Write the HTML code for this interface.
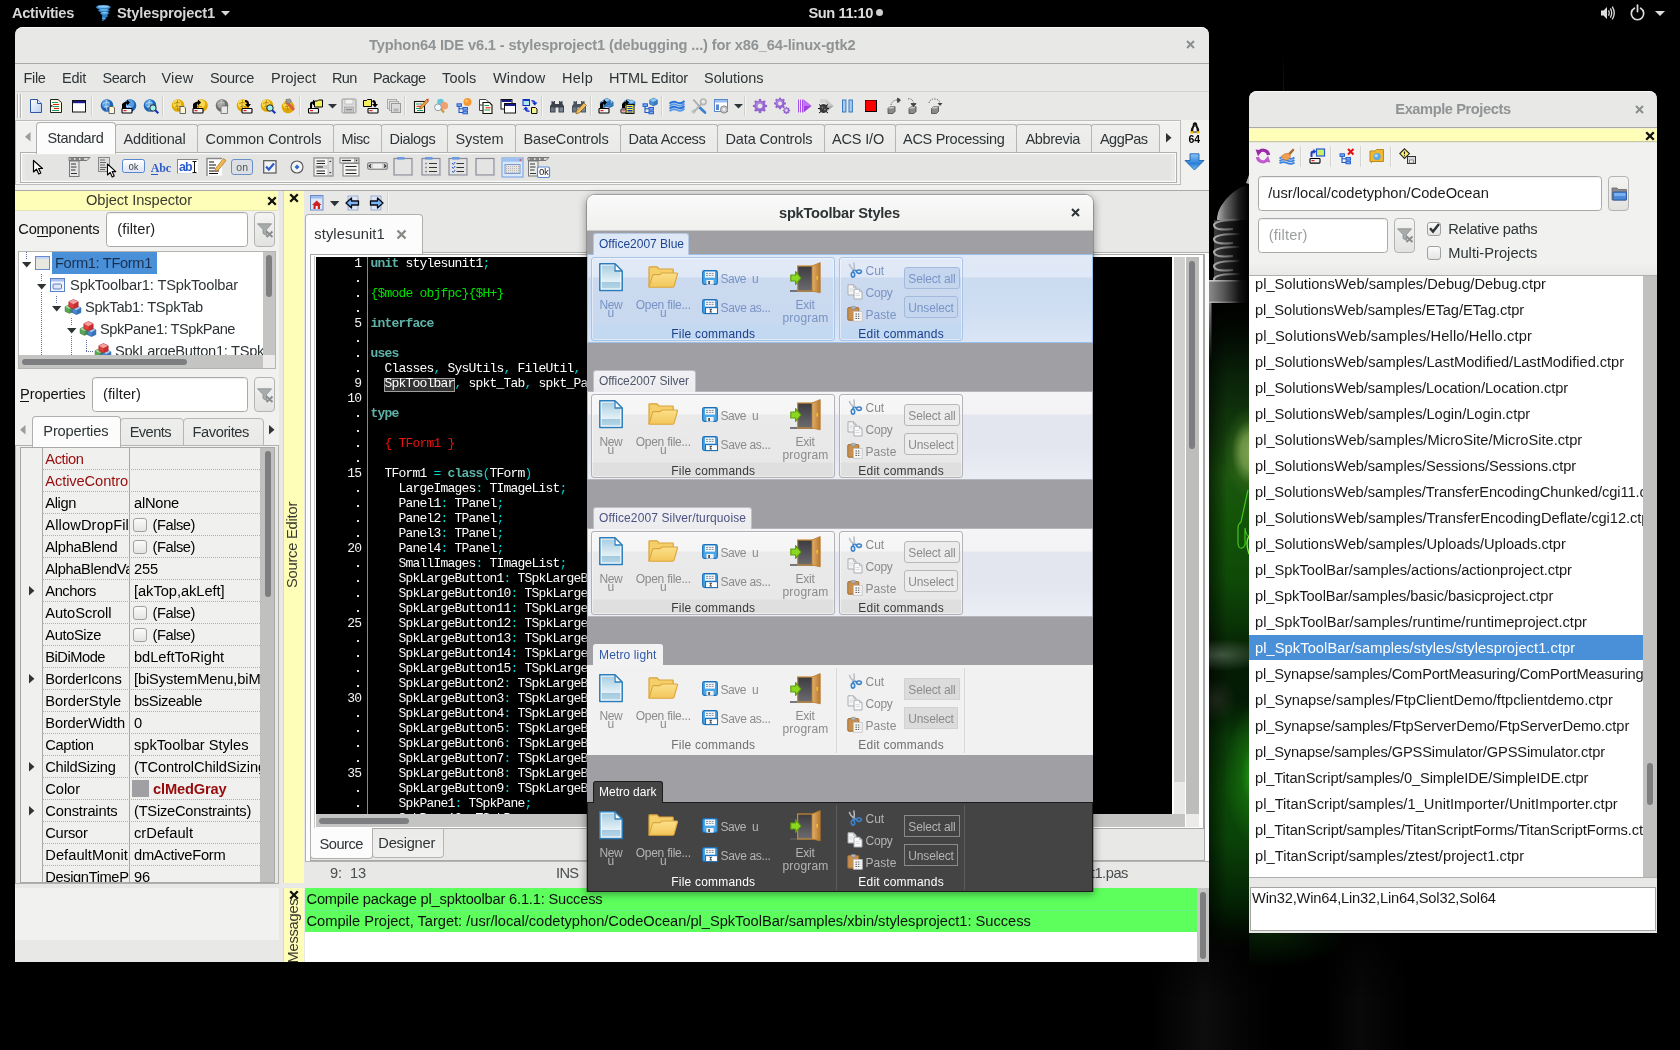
<!DOCTYPE html>
<html><head><meta charset="utf-8"><title>Typhon64 IDE</title>
<style>
html,body{margin:0;padding:0}
body{width:1680px;height:1050px;background:#000;position:relative;overflow:hidden;font-family:'Liberation Sans',sans-serif;font-size:14.5px;color:#2e3436}
div,span,svg{box-sizing:border-box}
svg{overflow:visible}
#root{position:absolute;left:0;top:0;width:1680px;height:1050px;will-change:transform}
.t{position:absolute;white-space:pre}
.b{position:absolute}
.f0{font-family:'Liberation Sans',sans-serif;font-size:14.67px;line-height:19px;font-weight:700;}
.f1{font-family:'Liberation Sans',sans-serif;font-size:14.5px;line-height:19px;}
.f2{font-family:'Liberation Mono',monospace;font-size:9px;line-height:12px;}
.f3{font-family:'Liberation Serif',serif;font-size:12px;line-height:16px;font-weight:700;}
.f4{font-family:'Liberation Sans',sans-serif;font-size:12.5px;line-height:16px;font-weight:700;}
.f5{font-family:'Liberation Mono',monospace;font-size:10.5px;line-height:14px;}
.f6{font-family:'Liberation Sans',sans-serif;font-size:10.5px;line-height:14px;font-weight:700;}
.f7{font-family:'Liberation Sans',sans-serif;font-size:14.67px;line-height:19px;}
.f8{font-family:'Liberation Mono',monospace;font-size:13px;line-height:17px;}
.f9{font-family:'Liberation Mono',monospace;font-size:13px;line-height:17px;font-weight:700;}
.f10{font-family:'Liberation Sans',sans-serif;font-size:12px;line-height:16px;}
</style></head>
<body>
<div id="root">
<!-- p_top -->
<div class="b" style="left:1209px;top:0px;width:40px;height:1050px;background:#000;background:radial-gradient(ellipse 26px 46px at 41px 452px,rgba(132,168,84,.95) 0,rgba(120,160,76,.85) 35%,rgba(60,110,30,.35) 70%,rgba(0,0,0,0) 100%),radial-gradient(ellipse 30px 70px at 46px 775px,rgba(36,170,20,.95) 0,rgba(24,120,14,.6) 45%,rgba(0,0,0,0) 100%),radial-gradient(ellipse 44px 16px at 14px 655px,rgba(120,140,120,.5) 0,rgba(0,0,0,0) 100%),radial-gradient(ellipse 20px 22px at 8px 700px,rgba(60,62,50,.45) 0,rgba(0,0,0,0) 100%),linear-gradient(90deg,rgba(0,0,0,.55) 0,rgba(0,0,0,0) 45%),linear-gradient(180deg,#000 0,#000 300px,#020802 330px,#0a240a 380px,#123a0c 430px,#1c560f 475px,#125408 520px,#0f4a08 580px,#0a3606 620px,#051c04 660px,#041a04 700px,#0a3a08 740px,#0c4a08 790px,#0a4208 840px,#042404 900px,#020c02 930px,#000 950px,#000 1050px)"></div><svg class="b" style="left:1209px;top:170px;" width="40" height="190" viewBox="0 0 40 190"><defs><linearGradient id="wc1" gradientUnits="userSpaceOnUse" x1="6" y1="0" x2="40" y2="0"><stop offset="0" stop-color="#c4c4c4"/><stop offset=".3" stop-color="#6a6a6a"/><stop offset=".7" stop-color="#1c1c1c"/><stop offset="1" stop-color="#000"/></linearGradient><linearGradient id="wc2" gradientUnits="userSpaceOnUse" x1="0" y1="0" x2="40" y2="0"><stop offset="0" stop-color="#8a8a8a"/><stop offset=".35" stop-color="#5a5a5a"/><stop offset=".75" stop-color="#141414"/><stop offset="1" stop-color="#000"/></linearGradient><linearGradient id="wc3" gradientUnits="userSpaceOnUse" x1="4" y1="0" x2="36" y2="0"><stop offset="0" stop-color="#c8c8c8"/><stop offset=".4" stop-color="#8a8a8a"/><stop offset=".85" stop-color="#8a8a8a" stop-opacity="0"/></linearGradient><linearGradient id="wc4" gradientUnits="userSpaceOnUse" x1="0" y1="130" x2="0" y2="190"><stop offset="0" stop-color="#8a8a8a"/><stop offset="1" stop-color="#8a8a8a" stop-opacity="0"/></linearGradient></defs><path d="M37 13 L40 5 V14 Z" fill="#b0b0b0"/><path d="M40 14 Q22 20 12 36 Q8 43 8 50 H40 Z" fill="url(#wc1)"/><rect x="5" y="50" width="35" height="60" fill="url(#wc1)" opacity=".3"/><path d="M40 50 Q6 49 5 55 Q5 61 24 59" fill="none" stroke="url(#wc3)" stroke-width="2.1" opacity=".85"/><path d="M40 64 Q6 63 5 69 Q5 75 24 73" fill="none" stroke="url(#wc3)" stroke-width="2.1" opacity=".85"/><path d="M40 77 Q6 76 5 82 Q5 88 24 86" fill="none" stroke="url(#wc3)" stroke-width="2.1" opacity=".85"/><path d="M40 91 Q6 90 5 96 Q5 102 24 100" fill="none" stroke="url(#wc3)" stroke-width="2.1" opacity=".85"/><path d="M40 104 Q6 103 5 109 Q5 115 24 113" fill="none" stroke="url(#wc3)" stroke-width="2.1" opacity=".85"/><rect x="0" y="110" width="40" height="23" fill="url(#wc2)"/><rect x="0" y="110" width="40" height="1.6" fill="url(#wc3)"/><rect x="0" y="131.5" width="40" height="1.5" fill="url(#wc3)" opacity=".7"/><rect x="0" y="133" width="2.5" height="57" fill="url(#wc4)"/><path d="M39 320 L32 352 Q29 354 29 358 V372 Q29 379 33 378 Q37 377 36 370 V358 Q37 366 40 366" fill="none" stroke="#48d020" stroke-width="1.2" opacity=".9"/><path d="M40 366 Q36 372 40 384" fill="none" stroke="#70f030" stroke-width="1.4"/></svg><div class="b" style="left:1150px;top:933px;width:300px;height:117px;background:linear-gradient(90deg,rgba(0,0,0,0) 0,rgba(24,24,24,.55) 18%,rgba(14,14,14,.35) 30%,rgba(0,0,0,0) 42%,rgba(0,0,0,0) 58%,rgba(20,20,20,.45) 70%,rgba(0,0,0,0) 86%);-webkit-mask-image:linear-gradient(180deg,rgba(0,0,0,.2),#000 60%);mask-image:linear-gradient(180deg,rgba(0,0,0,.2),#000 60%)"></div><div class="b" style="left:1249px;top:933px;width:100px;height:40px;background:radial-gradient(ellipse 80px 34px at 20px 0,rgba(8,44,8,.7) 0,rgba(0,0,0,0) 100%)"></div><div class="b" style="left:1283px;top:50px;width:1px;height:41px;background:linear-gradient(180deg,rgba(60,60,60,0),rgba(60,60,60,.3))"></div><div class="b" style="left:0px;top:0px;width:1680px;height:27px;background:#000;"></div><span class="t f0" style="left:12px;top:4px;color:#d6d6d6;letter-spacing:-0.32px;">Activities</span><svg class="b" style="left:95px;top:4px;" width="17" height="18" viewBox="0 0 17 18"><ellipse cx="8.3" cy="3.2" rx="7.2" ry="2.3" fill="#3f93d6"/><ellipse cx="8.3" cy="2.7" rx="5.4" ry="1.1" fill="#8cc6f2"/><ellipse cx="8.8" cy="6.3" rx="5.8" ry="2" fill="#2c7cc4"/><ellipse cx="8.8" cy="5.9" rx="4" ry=".9" fill="#6eb4ea"/><ellipse cx="9.6" cy="9.2" rx="4.3" ry="1.8" fill="#3f93d6"/><ellipse cx="9.6" cy="8.8" rx="2.8" ry=".8" fill="#8cc6f2"/><ellipse cx="9.8" cy="12" rx="3" ry="1.6" fill="#2c7cc4"/><ellipse cx="8.8" cy="14.4" rx="2" ry="1.3" fill="#4f9fdc"/><path d="M8.6 15 Q7 16.5 6.3 17.6 Q8.6 17 9.6 15.4 Z" fill="#3f93d6"/></svg><span class="t f0" style="left:117px;top:4px;color:#d6d6d6;letter-spacing:-0.16px;">Stylesproject1</span><svg class="b" style="left:221px;top:10.7px;" width="9" height="5" viewBox="0 0 9 5"><path d="M0 0 L9 0 L4.5 4.7 Z" fill="#d8d8d8"/></svg><span class="t f0" style="left:808.5px;top:4px;color:#dcdcdc;letter-spacing:-0.44px;">Sun 11:10</span><div class="b" style="left:875.5px;top:8.7px;width:7.6px;height:7.6px;background:#cfcfcf;border-radius:50%"></div><svg class="b" style="left:1600px;top:5px;" width="17" height="16" viewBox="0 0 17 16"><path d="M1 5.5 L3.5 5.5 L7 2 L7 14 L3.5 10.5 L1 10.5 Z" fill="#dcdcdc"/><path d="M8.6 5.3 Q10 8 8.6 10.7" stroke="#dcdcdc" stroke-width="1.3" fill="none"/><path d="M10.4 3.4 Q13 8 10.4 12.6" stroke="#dcdcdc" stroke-width="1.3" fill="none"/><path d="M12.3 1.6 Q16.2 8 12.3 14.4" stroke="#dcdcdc" stroke-width="1.3" fill="none"/></svg><svg class="b" style="left:1629px;top:4px;" width="17" height="17" viewBox="0 0 17 17"><path d="M5.4 4.2 A6.2 6.2 0 1 0 11.6 4.2" stroke="#dcdcdc" stroke-width="1.7" fill="none" stroke-linecap="round"/><path d="M8.5 1.2 L8.5 7.6" stroke="#dcdcdc" stroke-width="1.7" stroke-linecap="round"/></svg><svg class="b" style="left:1655px;top:10.8px;" width="10" height="6" viewBox="0 0 10 6"><path d="M0 0 L10 0 L5 5 Z" fill="#dcdcdc"/></svg>
<!-- p_ide -->
<div class="b" style="left:15px;top:27px;width:1194px;height:935px;background:#e8e8e7;border-radius:8px 8px 0 0;box-shadow:inset 0 1px 0 #f8f8f8"></div><span class="t f0" style="left:369px;top:36px;color:#8f9394;letter-spacing:-0.14px;">Typhon64 IDE v6.1 - stylesproject1 (debugging ...) for x86_64-linux-gtk2</span><svg class="b" style="left:1186px;top:40px;" width="9" height="9" viewBox="0 0 9 9"><path d="M1 1 L8 8 M8 1 L1 8" stroke="#8b8e8f" stroke-width="2" fill="none"/></svg><div class="b" style="left:15px;top:63px;width:1194px;height:1px;background:#a9a9a8;"></div><span class="t f1" style="left:23.5px;top:69px;color:#2e3436;letter-spacing:-0.34px;">File</span><span class="t f1" style="left:62px;top:69px;color:#2e3436;letter-spacing:-0.25px;">Edit</span><span class="t f1" style="left:102.5px;top:69px;color:#2e3436;letter-spacing:-0.49px;">Search</span><span class="t f1" style="left:161.5px;top:69px;color:#2e3436;letter-spacing:0.21px;">View</span><span class="t f1" style="left:210px;top:69px;color:#2e3436;letter-spacing:-0.33px;">Source</span><span class="t f1" style="left:271px;top:69px;color:#2e3436;letter-spacing:-0.02px;">Project</span><span class="t f1" style="left:332px;top:69px;color:#2e3436;letter-spacing:-0.7px;">Run</span><span class="t f1" style="left:373px;top:69px;color:#2e3436;letter-spacing:-0.56px;">Package</span><span class="t f1" style="left:442px;top:69px;color:#2e3436;letter-spacing:0.13px;">Tools</span><span class="t f1" style="left:493px;top:69px;color:#2e3436;letter-spacing:0.15px;">Window</span><span class="t f1" style="left:562px;top:69px;color:#2e3436;letter-spacing:0.29px;">Help</span><span class="t f1" style="left:609px;top:69px;color:#2e3436;letter-spacing:-0.17px;">HTML Editor</span><span class="t f1" style="left:704px;top:69px;color:#2e3436;letter-spacing:-0.02px;">Solutions</span><div class="b" style="left:15px;top:91px;width:1194px;height:1px;background:#d2d2d1;"></div><div class="b" style="left:17px;top:94px;width:1px;height:24px;background:#b4b4b4;"></div><div class="b" style="left:18px;top:94px;width:1px;height:24px;background:#fbfbfb;"></div><div class="b" style="left:20px;top:94px;width:1px;height:24px;background:#b4b4b4;"></div><div class="b" style="left:21px;top:94px;width:1px;height:24px;background:#fbfbfb;"></div><div class="b" style="left:91px;top:96px;width:1px;height:20px;background:#d0d0cf;"></div><div class="b" style="left:92px;top:96px;width:1px;height:20px;background:#f6f6f5;"></div><div class="b" style="left:162px;top:96px;width:1px;height:20px;background:#d0d0cf;"></div><div class="b" style="left:163px;top:96px;width:1px;height:20px;background:#f6f6f5;"></div><div class="b" style="left:299px;top:96px;width:1px;height:20px;background:#d0d0cf;"></div><div class="b" style="left:300px;top:96px;width:1px;height:20px;background:#f6f6f5;"></div><div class="b" style="left:404px;top:96px;width:1px;height:20px;background:#d0d0cf;"></div><div class="b" style="left:405px;top:96px;width:1px;height:20px;background:#f6f6f5;"></div><div class="b" style="left:541px;top:96px;width:1px;height:20px;background:#d0d0cf;"></div><div class="b" style="left:542px;top:96px;width:1px;height:20px;background:#f6f6f5;"></div><div class="b" style="left:590px;top:96px;width:1px;height:20px;background:#d0d0cf;"></div><div class="b" style="left:591px;top:96px;width:1px;height:20px;background:#f6f6f5;"></div><div class="b" style="left:661px;top:96px;width:1px;height:20px;background:#d0d0cf;"></div><div class="b" style="left:662px;top:96px;width:1px;height:20px;background:#f6f6f5;"></div><div class="b" style="left:744px;top:96px;width:1px;height:20px;background:#d0d0cf;"></div><div class="b" style="left:745px;top:96px;width:1px;height:20px;background:#f6f6f5;"></div><svg class="b" style="left:28px;top:98px;" width="16" height="16" viewBox="0 0 16 16"><defs><linearGradient id="gdn" x1="0" y1="0" x2="1" y2="1"><stop offset="0" stop-color="#fff"/><stop offset="1" stop-color="#b9cdf0"/></linearGradient></defs><path d="M2.5 1.5 H9.5 L13.5 5.5 V14.5 H2.5 Z" fill="url(#gdn)" stroke="#2f55a8" stroke-width="1"/><path d="M9.5 1.5 V5.5 H13.5" fill="#dfe8fa" stroke="#2f55a8" stroke-width="1"/></svg><svg class="b" style="left:48px;top:98px;" width="16" height="16" viewBox="0 0 16 16"><path d="M2.5 1.5 H10 L13.5 4.5 V14.5 H2.5 Z" fill="#fffde0" stroke="#222" stroke-width="1"/><path d="M4 4.5 H10 M5 8.5 H11 M4 12.5 H11" stroke="#1a9a7a" stroke-width="1.2"/><path d="M5 6.5 H11 M6 10.5 H11" stroke="#e02020" stroke-width="1.2"/><path d="M2 8 H4.5" stroke="#222" stroke-width="1.5"/></svg><svg class="b" style="left:70.5px;top:98px;" width="16" height="16" viewBox="0 0 16 16"><rect x="1.5" y="2.5" width="13" height="11.5" fill="#fff" stroke="#111" stroke-width="1"/><rect x="2" y="3" width="12" height="2.2" fill="#1a1a8a"/></svg><svg class="b" style="left:100px;top:98px;" width="16" height="16" viewBox="0 0 16 16"><circle cx="7" cy="7.5" r="6.3" fill="#1d63b8"/><circle cx="6" cy="6" r="4.2" fill="#5fa8e8" opacity=".85"/><path d="M3 6 Q6 3 9 5 M4 9 Q7 7 10 9 M6.5 2 Q5 7 7 12.5" stroke="#dff0ff" stroke-width=".8" fill="none" opacity=".8"/><path d="M9 8.5 H13 L14.5 10 V15.5 H9 Z" fill="#fff6d8" stroke="#555" stroke-width=".9"/></svg><svg class="b" style="left:121px;top:98px;" width="16" height="16" viewBox="0 0 16 16"><circle cx="9" cy="7.5" r="6.3" fill="#1d63b8"/><circle cx="9" cy="6" r="4.2" fill="#5fa8e8" opacity=".85"/><path d="M3 6 Q6 3 9 5 M4 9 Q7 7 10 9 M6.5 2 Q5 7 7 12.5" stroke="#dff0ff" stroke-width=".8" fill="none" opacity=".8"/><path d="M1 10 V6 Q3 3.5 6 3.5 V1.5 L9 4.5 L6 7.5 V5.5 Q5 5.5 5 7 V10 Z" fill="#000"/><rect x="1" y="10.5" width="10" height="4.5" rx=".8" fill="#f4f4f4" stroke="#000" stroke-width="1.1"/><rect x="2.5" y="12" width="3" height="1.2" fill="#e02020"/></svg><svg class="b" style="left:142.5px;top:98px;" width="16" height="16" viewBox="0 0 16 16"><circle cx="7" cy="7.5" r="6.3" fill="#1d63b8"/><circle cx="6" cy="6" r="4.2" fill="#5fa8e8" opacity=".85"/><path d="M3 6 Q6 3 9 5 M4 9 Q7 7 10 9 M6.5 2 Q5 7 7 12.5" stroke="#dff0ff" stroke-width=".8" fill="none" opacity=".8"/><circle cx="10" cy="10" r="3.2" fill="#9ff0f0" stroke="#222" stroke-width="1"/><path d="M12.3 12.3 L15.3 15.3" stroke="#1030c0" stroke-width="2"/></svg><svg class="b" style="left:171px;top:98px;" width="16" height="16" viewBox="0 0 16 16"><circle cx="7" cy="7.5" r="6.3" fill="#e0a800"/><circle cx="6" cy="6" r="4.2" fill="#ffe25a" opacity=".85"/><path d="M3 6 Q6 3 9 5 M4 9 Q7 7 10 9 M6.5 2 Q5 7 7 12.5" stroke="#9a6a00" stroke-width=".8" fill="none" opacity=".8"/><path d="M9 8.5 H13 L14.5 10 V15.5 H9 Z" fill="#fff6d8" stroke="#555" stroke-width=".9"/></svg><svg class="b" style="left:192px;top:98px;" width="16" height="16" viewBox="0 0 16 16"><circle cx="9.5" cy="7.5" r="6.3" fill="#e0a800"/><circle cx="9" cy="6" r="4.2" fill="#ffe25a" opacity=".85"/><path d="M3 6 Q6 3 9 5 M4 9 Q7 7 10 9 M6.5 2 Q5 7 7 12.5" stroke="#9a6a00" stroke-width=".8" fill="none" opacity=".8"/><path d="M1 10 V6 Q3 3.5 6 3.5 V1.5 L9 4.5 L6 7.5 V5.5 Q5 5.5 5 7 V10 Z" fill="#000"/><rect x="1" y="10.5" width="10" height="4.5" rx=".8" fill="#f4f4f4" stroke="#000" stroke-width="1.1"/><rect x="2.5" y="12" width="3" height="1.2" fill="#e02020"/></svg><svg class="b" style="left:215px;top:98px;" width="16" height="16" viewBox="0 0 16 16"><circle cx="7" cy="7.5" r="6.3" fill="#6e6e6e"/><circle cx="6" cy="6" r="4.2" fill="#a8a8a8" opacity=".85"/><path d="M3 6 Q6 3 9 5 M4 9 Q7 7 10 9 M6.5 2 Q5 7 7 12.5" stroke="#d8d8d8" stroke-width=".8" fill="none" opacity=".8"/><path d="M6 8 H12.5 V15.5 H6 Z" fill="#e8e8e8" stroke="#777" stroke-width=".9"/></svg><svg class="b" style="left:236px;top:98px;" width="16" height="16" viewBox="0 0 16 16"><circle cx="7" cy="7.5" r="6.3" fill="#e0a800"/><circle cx="6" cy="6" r="4.2" fill="#ffe25a" opacity=".85"/><path d="M3 6 Q6 3 9 5 M4 9 Q7 7 10 9 M6.5 2 Q5 7 7 12.5" stroke="#9a6a00" stroke-width=".8" fill="none" opacity=".8"/><path d="M9 2 Q13 2 13 6 H15 L12 9.5 L9 6 H11 Q11 4 9 4 Z" fill="#000"/><rect x="6" y="10.5" width="10" height="4.5" rx=".8" fill="#f4f4f4" stroke="#000" stroke-width="1.1"/><rect x="7.5" y="12" width="3" height="1.2" fill="#e02020"/></svg><svg class="b" style="left:259.5px;top:98px;" width="16" height="16" viewBox="0 0 16 16"><circle cx="7" cy="7.5" r="6.3" fill="#e0a800"/><circle cx="6" cy="6" r="4.2" fill="#ffe25a" opacity=".85"/><path d="M3 6 Q6 3 9 5 M4 9 Q7 7 10 9 M6.5 2 Q5 7 7 12.5" stroke="#9a6a00" stroke-width=".8" fill="none" opacity=".8"/><circle cx="10" cy="10" r="3.2" fill="#9ff0f0" stroke="#222" stroke-width="1"/><path d="M12.3 12.3 L15.3 15.3" stroke="#1030c0" stroke-width="2"/></svg><svg class="b" style="left:280.5px;top:98px;" width="16" height="16" viewBox="0 0 16 16"><circle cx="7" cy="9" r="6.3" fill="#e0a800"/><circle cx="6" cy="6" r="4.2" fill="#ffe25a" opacity=".85"/><path d="M3 6 Q6 3 9 5 M4 9 Q7 7 10 9 M6.5 2 Q5 7 7 12.5" stroke="#9a6a00" stroke-width=".8" fill="none" opacity=".8"/><path d="M6 2 L14 11 L12 13 L4 4 Z" fill="#e05a40"/><path d="M5 1.5 L9 1 L10.5 3.5 L8 6 L5.5 5 Z" fill="#999" stroke="#666" stroke-width=".6"/></svg><svg class="b" style="left:306.5px;top:98px;" width="16" height="16" viewBox="0 0 16 16"><path d="M3 10 V6 Q3 3.5 6 3.5 V1.5 L9 4.5 L6 7.5 V5.5 Q5 5.5 5 7 V10 Z" fill="#000"/><path d="M7.5 3.0 H10.5 L11.5 2.0 H15.5 V9.0 H7.5 Z" fill="#f4f05a" stroke="#000" stroke-width="1"/><rect x="1.5" y="10.5" width="10" height="4.5" rx=".8" fill="#f4f4f4" stroke="#000" stroke-width="1.1"/><rect x="3" y="12" width="3" height="1.2" fill="#e02020"/></svg><svg class="b" style="left:341px;top:98px;" width="16" height="16" viewBox="0 0 16 16"><rect x="1" y="1" width="14" height="14" rx="1" fill="#dcdcdc" stroke="#9a9a9a" stroke-width="1"/><rect x="4" y="1.5" width="8" height="4.5" fill="#f2f2f2" stroke="#aaa" stroke-width=".6"/><rect x="3.5" y="9" width="9" height="5.5" fill="#c4c4c4" stroke="#9a9a9a" stroke-width=".6"/><rect x="5" y="11" width="6" height="1.2" fill="#8e8e8e"/></svg><svg class="b" style="left:363px;top:98px;" width="16" height="16" viewBox="0 0 16 16"><path d="M0.5 2.5 H3.5 L4.5 1.5 H8.5 V8.5 H0.5 Z" fill="#f4f05a" stroke="#000" stroke-width="1"/><path d="M10 2 Q13 2 13 6 H15 L12 9.5 L9 6 H11 Q11 4 9 4 Z" fill="#000"/><rect x="5" y="10.5" width="10" height="4.5" rx=".8" fill="#f4f4f4" stroke="#000" stroke-width="1.1"/><rect x="6.5" y="12" width="3" height="1.2" fill="#e02020"/></svg><svg class="b" style="left:385.5px;top:98px;" width="16" height="16" viewBox="0 0 16 16"><rect x="1.5" y="1.5" width="9" height="9" fill="#e4e4e4" stroke="#aaa"/><rect x="3.5" y="3.5" width="9" height="9" fill="#e4e4e4" stroke="#aaa"/><rect x="5.5" y="5.5" width="9" height="9" fill="#dcdcdc" stroke="#9a9a9a"/><rect x="7.5" y="10.5" width="5" height="3" fill="#b4b4b4"/></svg><svg class="b" style="left:412.5px;top:98px;" width="16" height="16" viewBox="0 0 16 16"><rect x="1.5" y="3.5" width="10" height="11" fill="#fffde8" stroke="#111" stroke-width="1.1"/><path d="M3 6 H9 M3 10.5 H8 M4 12.5 H10" stroke="#1a9a7a" stroke-width="1.1"/><path d="M3.5 8.3 H8" stroke="#e02020" stroke-width="1.1"/><path d="M7 9 L13.5 1.5 L15.5 3 L9 10.5 L6.5 11 Z" fill="#f0a040" stroke="#7a3a10" stroke-width=".6"/><path d="M13 1.5 L15.5 0.5 L15.5 3 Z" fill="#e03030"/></svg><svg class="b" style="left:433px;top:98px;" width="16" height="16" viewBox="0 0 16 16"><circle cx="7.5" cy="4" r="3.3" fill="#62c8d8"/><circle cx="11.3" cy="7.8" r="3.8" fill="#f0a070"/><path d="M8 11 L11 14.5" stroke="#c89a40" stroke-width="2.2"/><circle cx="5" cy="9.3" r="3.4" fill="#f0f8ff" stroke="#999" stroke-width="1"/></svg><svg class="b" style="left:455.5px;top:98px;" width="16" height="16" viewBox="0 0 16 16"><circle cx="11.5" cy="4" r="4" fill="#f59a30"/><circle cx="10.5" cy="3" r="1.8" fill="#ffc070" opacity=".8"/><path d="M3 8 V14.5 H8 M3 10.8 H8" stroke="#1d55c8" stroke-width="1.1" fill="none"/><rect x="1" y="5.8" width="4.5" height="2.6" fill="#78a8f0" stroke="#1d55c8" stroke-width=".9"/><rect x="7" y="9.5" width="4.5" height="2.6" fill="#78a8f0" stroke="#1d55c8" stroke-width=".9"/><rect x="7" y="13.2" width="4.5" height="2.6" fill="#78a8f0" stroke="#1d55c8" stroke-width=".9"/></svg><svg class="b" style="left:478px;top:98px;" width="16" height="16" viewBox="0 0 16 16"><path d="M1.5 1.5 H8 L10.5 4 V12.5 H1.5 Z" fill="#fff" stroke="#444" stroke-width="1"/><path d="M5 4.5 H11.5 L14 7 V15.5 H5 Z" fill="#fffde8" stroke="#111" stroke-width="1.1"/><path d="M6.5 7.5 H11 M6.5 12 H12" stroke="#1a9a7a" stroke-width="1.1"/><path d="M7.5 9.8 H12.5" stroke="#e02020" stroke-width="1.1"/><path d="M2 7 H4.5" stroke="#333" stroke-width="1"/></svg><svg class="b" style="left:500px;top:98px;" width="16" height="16" viewBox="0 0 16 16"><rect x="1" y="1.5" width="11" height="9.5" fill="#fff" stroke="#111" stroke-width="1"/><rect x="1.5" y="2" width="10" height="2" fill="#1a1a8a"/><rect x="4.5" y="5.5" width="11" height="9.5" fill="#fff" stroke="#111" stroke-width="1"/><rect x="5" y="6" width="10" height="2" fill="#1a1a8a"/></svg><svg class="b" style="left:521.5px;top:98px;" width="16" height="16" viewBox="0 0 16 16"><rect x="1" y="1.5" width="6.5" height="6" fill="#b0e8f0" stroke="#1030c0" stroke-width="1"/><rect x="1.5" y="1.5" width="6" height="1.5" fill="#1030c0"/><path d="M9.5 9.5 H13.5 L15 11 V15.5 H9.5 Z" fill="#f4f08a" stroke="#111" stroke-width="1"/><path d="M9.5 2 Q13.5 2 13.5 4.5 H15.5 L12.8 7.5 L10 4.5 H12 Q12 3.5 9.5 3.5 Z" fill="#1030d0"/><path d="M7.5 14 Q3 14 3 11.5 H1 L3.8 8.5 L6.5 11.5 H4.5 Q4.5 12.5 7.5 12.5 Z" fill="#1030d0"/></svg><svg class="b" style="left:549px;top:98px;" width="16" height="16" viewBox="0 0 16 16"><path d="M2.5 3 H6 V6 H10 V3 H13.5 V6 L15 8 V14.5 H9.5 V9.5 H6.5 V14.5 H1 V8 L2.5 6 Z" fill="#3c424c"/><rect x="2" y="9.5" width="3.5" height="4" fill="#6c7684"/><rect x="10.5" y="9.5" width="3.5" height="4" fill="#7c8898"/><path d="M3.5 3.5 H5 M11 3.5 H12.5" stroke="#9aa6b4" stroke-width="1"/></svg><svg class="b" style="left:570.5px;top:98px;" width="16" height="16" viewBox="0 0 16 16"><path d="M2.5 3 H6 V6 H10 V3 H13.5 V6 L15 8 V14.5 H9.5 V9.5 H6.5 V14.5 H1 V8 L2.5 6 Z" fill="#4a525e"/><rect x="2" y="9.5" width="3.5" height="4" fill="#6c7684"/><rect x="10.5" y="9.5" width="3.5" height="4" fill="#7c8898"/><path d="M3.5 3.5 H5 M11 3.5 H12.5" stroke="#9aa6b4" stroke-width="1"/><path d="M5.5 13 L13 5 L15.5 7.5 L8 15 L5 15.8 Z" fill="#f0c060" stroke="#8a5a18" stroke-width=".7"/></svg><svg class="b" style="left:598px;top:98px;" width="16" height="16" viewBox="0 0 16 16"><path d="M6 2.4 L9.6 4.02 L9.6 7.98 L6 9.6 L2.4 7.98 L2.4 4.02 Z" fill="#4a90d0" stroke="#2a6ab0" stroke-width=".7"/><path d="M6 2.4 L9.6 4.02 L6 6 L2.4 4.02 Z" fill="#8ec8f0"/><path d="M6 6 L9.6 4.02 L9.6 7.98 L6 9.6 Z" fill="#2a6ab0" opacity=".55"/><path d="M11.5 2.4 L15.1 4.02 L15.1 7.98 L11.5 9.6 L7.9 7.98 L7.9 4.02 Z" fill="#4a90d0" stroke="#2a6ab0" stroke-width=".7"/><path d="M11.5 2.4 L15.1 4.02 L11.5 6 L7.9 4.02 Z" fill="#8ec8f0"/><path d="M11.5 6 L15.1 4.02 L15.1 7.98 L11.5 9.6 Z" fill="#2a6ab0" opacity=".55"/><path d="M8.8 0.3999999999999999 L12.200000000000001 1.9299999999999997 L12.200000000000001 5.67 L8.8 7.199999999999999 L5.4 5.67 L5.4 1.9299999999999997 Z" fill="#4a90d0" stroke="#2a6ab0" stroke-width=".7"/><path d="M8.8 0.3999999999999999 L12.200000000000001 1.9299999999999997 L8.8 3.8 L5.4 1.9299999999999997 Z" fill="#8ec8f0"/><path d="M8.8 3.8 L12.200000000000001 1.9299999999999997 L12.200000000000001 5.67 L8.8 7.199999999999999 Z" fill="#2a6ab0" opacity=".55"/><path d="M2 10 V6 Q3 3.5 6 3.5 V1.5 L9 4.5 L6 7.5 V5.5 Q5 5.5 5 7 V10 Z" fill="#000"/><rect x="1" y="10.5" width="10" height="4.5" rx=".8" fill="#f4f4f4" stroke="#000" stroke-width="1.1"/><rect x="2.5" y="12" width="3" height="1.2" fill="#e02020"/></svg><svg class="b" style="left:620px;top:98px;" width="16" height="16" viewBox="0 0 16 16"><path d="M8 1.4 L11.6 3.0199999999999996 L11.6 6.98 L8 8.6 L4.4 6.98 L4.4 3.0199999999999996 Z" fill="#4a90d0" stroke="#2a6ab0" stroke-width=".7"/><path d="M8 1.4 L11.6 3.0199999999999996 L8 5 L4.4 3.0199999999999996 Z" fill="#8ec8f0"/><path d="M8 5 L11.6 3.0199999999999996 L11.6 6.98 L8 8.6 Z" fill="#2a6ab0" opacity=".55"/><path d="M11.5 2.1 L14.9 3.63 L14.9 7.37 L11.5 8.9 L8.1 7.37 L8.1 3.63 Z" fill="#4a90d0" stroke="#2a6ab0" stroke-width=".7"/><path d="M11.5 2.1 L14.9 3.63 L11.5 5.5 L8.1 3.63 Z" fill="#8ec8f0"/><path d="M11.5 5.5 L14.9 3.63 L14.9 7.37 L11.5 8.9 Z" fill="#2a6ab0" opacity=".55"/><path d="M2 10 V6 Q3 3.5 6 3.5 V1.5 L9 4.5 L6 7.5 V5.5 Q5 5.5 5 7 V10 Z" fill="#000"/><rect x="1" y="11" width="6" height="4" rx=".8" fill="#f4f4f4" stroke="#000" stroke-width="1"/><rect x="2.3" y="12.3" width="2.5" height="1.1" fill="#e02020"/><rect x="6" y="6.5" width="8" height="9" fill="#f4f04a" stroke="#111" stroke-width="1"/><path d="M7.5 8.5 H12.5 M7.5 10.5 H12.5 M7.5 12.5 H12.5 M7.5 14 H12.5" stroke="#1030c0" stroke-width="1"/></svg><svg class="b" style="left:641.5px;top:98px;" width="16" height="16" viewBox="0 0 16 16"><path d="M11.5 0.20000000000000018 L15.3 1.9100000000000001 L15.3 6.09 L11.5 7.8 L7.7 6.09 L7.7 1.9100000000000001 Z" fill="#4a90d0" stroke="#2a6ab0" stroke-width=".7"/><path d="M11.5 0.20000000000000018 L15.3 1.9100000000000001 L11.5 4 L7.7 1.9100000000000001 Z" fill="#8ec8f0"/><path d="M11.5 4 L15.3 1.9100000000000001 L15.3 6.09 L11.5 7.8 Z" fill="#2a6ab0" opacity=".55"/><path d="M3 8 V14.5 H8 M3 10.8 H8" stroke="#1d55c8" stroke-width="1.1" fill="none"/><rect x="1" y="5.8" width="4.5" height="2.6" fill="#78a8f0" stroke="#1d55c8" stroke-width=".9"/><rect x="7" y="9.5" width="4.5" height="2.6" fill="#78a8f0" stroke="#1d55c8" stroke-width=".9"/><rect x="7" y="13.2" width="4.5" height="2.6" fill="#78a8f0" stroke="#1d55c8" stroke-width=".9"/></svg><svg class="b" style="left:668.5px;top:98px;" width="16" height="16" viewBox="0 0 16 16"><path d="M.5 5.5 Q4 2.5 8 4.5 T15.5 3" stroke="#2a72d8" stroke-width="1.9" fill="none"/><path d="M.5 8.0 Q4 5.0 8 7.0 T15.5 5.5" stroke="#5a9ae8" stroke-width="1.9" fill="none"/><path d="M.5 10.5 Q4 7.5 8 9.5 T15.5 8" stroke="#2a72d8" stroke-width="1.9" fill="none"/><path d="M.5 13.0 Q4 10.0 8 12.0 T15.5 10.5" stroke="#5a9ae8" stroke-width="1.9" fill="none"/></svg><svg class="b" style="left:691px;top:98px;" width="16" height="16" viewBox="0 0 16 16"><path d="M2 2 L3 1.5 L13.5 13 L14.5 15 L12.5 14 Z" fill="#b8b8b8" stroke="#8a8a8a" stroke-width=".5"/><path d="M8 9 L14 14.5" stroke="#3a80d0" stroke-width="2.6" stroke-linecap="round"/><path d="M2.5 14 L11 5.5" stroke="#b4b4b4" stroke-width="1.8"/><circle cx="12.3" cy="3.8" r="2.8" fill="none" stroke="#b4b4b4" stroke-width="1.6"/><circle cx="2.6" cy="13.6" r="1.5" fill="none" stroke="#b4b4b4" stroke-width="1"/></svg><svg class="b" style="left:713px;top:98px;" width="16" height="16" viewBox="0 0 16 16"><rect x="1.5" y="1.5" width="13" height="12" fill="#fff" stroke="#5a88d0" stroke-width="1"/><rect x="2" y="2" width="12" height="2.5" fill="#9ac0f0"/><rect x="3" y="6.5" width="3" height="5.5" fill="#5a88d0"/><circle cx="11" cy="11.5" r="3.6" fill="#c8c8c8" stroke="#8a8a8a" stroke-width="1"/><circle cx="11" cy="11.5" r="1.3" fill="#f4f4f4"/></svg><svg class="b" style="left:752px;top:98px;" width="16" height="16" viewBox="0 0 16 16"><circle cx="13.89" cy="8.00" r="1.36" fill="#9465cf"/><circle cx="12.16" cy="12.16" r="1.36" fill="#9465cf"/><circle cx="8.00" cy="13.89" r="1.36" fill="#9465cf"/><circle cx="3.84" cy="12.16" r="1.36" fill="#9465cf"/><circle cx="2.11" cy="8.00" r="1.36" fill="#9465cf"/><circle cx="3.84" cy="3.84" r="1.36" fill="#9465cf"/><circle cx="8.00" cy="2.11" r="1.36" fill="#9465cf"/><circle cx="12.16" cy="3.84" r="1.36" fill="#9465cf"/><circle cx="8" cy="8" r="5.58" fill="#9465cf"/><circle cx="7.4" cy="7.2" r="3.72" fill="#c4a4ea" opacity=".5"/><circle cx="8" cy="8" r="2.36" fill="#e8e8e7"/></svg><svg class="b" style="left:773.5px;top:98px;" width="16" height="16" viewBox="0 0 16 16"><circle cx="10.94" cy="5.50" r="1.14" fill="#9465cf"/><circle cx="9.49" cy="8.99" r="1.14" fill="#9465cf"/><circle cx="6.00" cy="10.44" r="1.14" fill="#9465cf"/><circle cx="2.51" cy="8.99" r="1.14" fill="#9465cf"/><circle cx="1.06" cy="5.50" r="1.14" fill="#9465cf"/><circle cx="2.51" cy="2.01" r="1.14" fill="#9465cf"/><circle cx="6.00" cy="0.56" r="1.14" fill="#9465cf"/><circle cx="9.49" cy="2.01" r="1.14" fill="#9465cf"/><circle cx="6" cy="5.5" r="4.68" fill="#9465cf"/><circle cx="5.4" cy="4.7" r="3.12" fill="#c4a4ea" opacity=".5"/><circle cx="6" cy="5.5" r="1.98" fill="#e8e8e7"/><circle cx="15.54" cy="12.50" r="0.70" fill="#9465cf"/><circle cx="14.65" cy="14.65" r="0.70" fill="#9465cf"/><circle cx="12.50" cy="15.54" r="0.70" fill="#9465cf"/><circle cx="10.35" cy="14.65" r="0.70" fill="#9465cf"/><circle cx="9.46" cy="12.50" r="0.70" fill="#9465cf"/><circle cx="10.35" cy="10.35" r="0.70" fill="#9465cf"/><circle cx="12.50" cy="9.46" r="0.70" fill="#9465cf"/><circle cx="14.65" cy="10.35" r="0.70" fill="#9465cf"/><circle cx="12.5" cy="12.5" r="2.88" fill="#9465cf"/><circle cx="11.9" cy="11.7" r="1.92" fill="#c4a4ea" opacity=".5"/><circle cx="12.5" cy="12.5" r="1.22" fill="#e8e8e7"/></svg><svg class="b" style="left:797px;top:98px;" width="16" height="16" viewBox="0 0 16 16"><path d="M1.5 1.5 V14.5 M3.5 1.5 V14.5 M5.5 1.5 V14.5" stroke="#a850e8" stroke-width="1"/><path d="M6.5 1.5 L14.5 8 L6.5 14.5 Z" fill="#a040e0"/><path d="M6.5 1.5 L14.5 8 L6.5 8 Z" fill="#c070f0"/></svg><svg class="b" style="left:818px;top:98px;" width="16" height="16" viewBox="0 0 16 16"><path d="M3 1.5 V5 M5 1.5 V5 M7 1.5 V5" stroke="#999" stroke-width=".9" stroke-dasharray="1 1"/><path d="M8 1.5 L15.5 8 L8 14.5 Z" fill="#a8a8a8"/><path d="M8 1.5 L15.5 8 L8 8 Z" fill="#c8c8c8"/><ellipse cx="5.5" cy="10.5" rx="4" ry="4.5" fill="#3a3a3a"/><path d="M1 6.5 L3 8 M10 6.5 L8 8 M0 10.5 H2 M9 10.5 H11 M1 15 L3 13.5 M10 15 L8 13.5" stroke="#111" stroke-width="1"/><circle cx="4.3" cy="9.5" r="1" fill="#777"/><circle cx="6.8" cy="11.5" r="1" fill="#777"/></svg><svg class="b" style="left:840px;top:98px;" width="16" height="16" viewBox="0 0 16 16"><rect x="2.5" y="2" width="3.4" height="12" fill="#a8cdf0" stroke="#3a78c0" stroke-width="1"/><rect x="9" y="2" width="3.4" height="12" fill="#a8cdf0" stroke="#3a78c0" stroke-width="1"/></svg><svg class="b" style="left:863.5px;top:98px;" width="16" height="16" viewBox="0 0 16 16"><rect x="1" y="2" width="12" height="12" fill="#000"/><rect x="1.5" y="2.5" width="10.5" height="10.5" fill="#ff0000"/></svg><svg class="b" style="left:886.5px;top:98px;" width="16" height="16" viewBox="0 0 16 16"><path d="M1 10.5 L3 8.5 H8 V13.5 L6 15.5 H1 Z" fill="#8a8a8a" stroke="#4a4a4a" stroke-width=".8"/><path d="M1 10.5 L3 8.5 H8 L6 10.5 Z" fill="#c4c4c4"/><path d="M4 7 Q5 2 10.5 2" stroke="#555" stroke-width="1" stroke-dasharray="1.2 1.2" fill="none"/><path d="M10.5 0 L13.5 2.2 L10.5 4.4 Z M11.8 0 V4.6" fill="#444" stroke="#444" stroke-width=".8"/></svg><svg class="b" style="left:908px;top:98px;" width="16" height="16" viewBox="0 0 16 16"><path d="M1 10.5 L3 8.5 H8 V13.5 L6 15.5 H1 Z" fill="#8a8a8a" stroke="#4a4a4a" stroke-width=".8"/><path d="M1 10.5 L3 8.5 H8 L6 10.5 Z" fill="#c4c4c4"/><path d="M0 1 Q4.5 0 5.5 5" stroke="#555" stroke-width="1" stroke-dasharray="1.2 1.2" fill="none"/><path d="M3 5.5 H8 L5.5 8.5 Z M3 6.2 H8" fill="#444" stroke="#444" stroke-width=".8"/></svg><svg class="b" style="left:928px;top:98px;" width="16" height="16" viewBox="0 0 16 16"><path d="M3.5 10.5 L5.5 8.5 H10.5 V13.5 L8.5 15.5 H3.5 Z" fill="#8a8a8a" stroke="#4a4a4a" stroke-width=".8"/><path d="M3.5 10.5 L5.5 8.5 H10.5 L8.5 10.5 Z" fill="#c4c4c4"/><path d="M1 5 Q2 .5 7 1 Q11.5 1.5 12 5" stroke="#555" stroke-width="1" stroke-dasharray="1.2 1.2" fill="none"/><path d="M9.5 5 H14.5 L12 8 Z" fill="#444"/></svg><svg class="b" style="left:327.5px;top:104px;" width="9" height="5" viewBox="0 0 9 5"><path d="M0 0 H9 L4.5 4.5 Z" fill="#2e3436"/></svg><svg class="b" style="left:733.5px;top:104px;" width="9" height="5" viewBox="0 0 9 5"><path d="M0 0 H9 L4.5 4.5 Z" fill="#2e3436"/></svg><div class="b" style="left:15px;top:120px;width:1194px;height:70px;background:#f1f1f0;"></div><div class="b" style="left:15px;top:120px;width:1166px;height:1px;background:#bdbdbc;"></div><div class="b" style="left:16px;top:121px;width:1164px;height:1px;background:#f9f9f9;"></div><div class="b" style="left:1180px;top:120px;width:1px;height:65px;background:#bdbdbc;"></div><div class="b" style="left:15px;top:184px;width:1166px;height:1px;background:#bdbdbc;"></div><div class="b" style="left:16px;top:183px;width:1164px;height:1px;background:#fafafa;"></div><div class="b" style="left:15px;top:120px;width:1px;height:65px;background:#bdbdbc;"></div><div class="b" style="left:20px;top:152px;width:1157px;height:31px;background:#e8e8e7;border:1px solid #b0b0af;box-shadow:inset 1px 1px 0 #fbfbfb,inset -1px -1px 0 #fbfbfb"></div><div class="b" style="left:25px;top:155px;width:1146px;height:25px;background:#e4e4e3;"></div><div class="b" style="left:115px;top:124px;width:83px;height:29px;background:#efefee;border:1px solid #b6b6b5;border-bottom:1px solid #b0b0af;border-radius:3px 3px 0 0;background:linear-gradient(180deg,#eeeeed,#eaeae9)"></div><span class="t f1" style="left:123.5px;top:130px;color:#2e3436;letter-spacing:-0.17px;">Additional</span><div class="b" style="left:197px;top:124px;width:137px;height:29px;background:#efefee;border:1px solid #b6b6b5;border-bottom:1px solid #b0b0af;border-radius:3px 3px 0 0;background:linear-gradient(180deg,#eeeeed,#eaeae9)"></div><span class="t f1" style="left:205.5px;top:130px;color:#2e3436;letter-spacing:-0.06px;">Common Controls</span><div class="b" style="left:333px;top:124px;width:49px;height:29px;background:#efefee;border:1px solid #b6b6b5;border-bottom:1px solid #b0b0af;border-radius:3px 3px 0 0;background:linear-gradient(180deg,#eeeeed,#eaeae9)"></div><span class="t f1" style="left:341.5px;top:130px;color:#2e3436;letter-spacing:-0.45px;">Misc</span><div class="b" style="left:381px;top:124px;width:67px;height:29px;background:#efefee;border:1px solid #b6b6b5;border-bottom:1px solid #b0b0af;border-radius:3px 3px 0 0;background:linear-gradient(180deg,#eeeeed,#eaeae9)"></div><span class="t f1" style="left:389.5px;top:130px;color:#2e3436;letter-spacing:-0.34px;">Dialogs</span><div class="b" style="left:447px;top:124px;width:69px;height:29px;background:#efefee;border:1px solid #b6b6b5;border-bottom:1px solid #b0b0af;border-radius:3px 3px 0 0;background:linear-gradient(180deg,#eeeeed,#eaeae9)"></div><span class="t f1" style="left:455.5px;top:130px;color:#2e3436;letter-spacing:-0.06px;">System</span><div class="b" style="left:515px;top:124px;width:106px;height:29px;background:#efefee;border:1px solid #b6b6b5;border-bottom:1px solid #b0b0af;border-radius:3px 3px 0 0;background:linear-gradient(180deg,#eeeeed,#eaeae9)"></div><span class="t f1" style="left:523.5px;top:130px;color:#2e3436;letter-spacing:-0.17px;">BaseControls</span><div class="b" style="left:620px;top:124px;width:98px;height:29px;background:#efefee;border:1px solid #b6b6b5;border-bottom:1px solid #b0b0af;border-radius:3px 3px 0 0;background:linear-gradient(180deg,#eeeeed,#eaeae9)"></div><span class="t f1" style="left:628.5px;top:130px;color:#2e3436;letter-spacing:-0.33px;">Data Access</span><div class="b" style="left:717px;top:124px;width:108px;height:29px;background:#efefee;border:1px solid #b6b6b5;border-bottom:1px solid #b0b0af;border-radius:3px 3px 0 0;background:linear-gradient(180deg,#eeeeed,#eaeae9)"></div><span class="t f1" style="left:725.5px;top:130px;color:#2e3436;letter-spacing:-0.13px;">Data Controls</span><div class="b" style="left:824px;top:124px;width:72px;height:29px;background:#efefee;border:1px solid #b6b6b5;border-bottom:1px solid #b0b0af;border-radius:3px 3px 0 0;background:linear-gradient(180deg,#eeeeed,#eaeae9)"></div><span class="t f1" style="left:832px;top:130px;color:#2e3436;letter-spacing:-0.17px;">ACS I/O</span><div class="b" style="left:895px;top:124px;width:122px;height:29px;background:#efefee;border:1px solid #b6b6b5;border-bottom:1px solid #b0b0af;border-radius:3px 3px 0 0;background:linear-gradient(180deg,#eeeeed,#eaeae9)"></div><span class="t f1" style="left:903px;top:130px;color:#2e3436;letter-spacing:-0.29px;">ACS Processing</span><div class="b" style="left:1016px;top:124px;width:76px;height:29px;background:#efefee;border:1px solid #b6b6b5;border-bottom:1px solid #b0b0af;border-radius:3px 3px 0 0;background:linear-gradient(180deg,#eeeeed,#eaeae9)"></div><span class="t f1" style="left:1025.5px;top:130px;color:#2e3436;letter-spacing:-0.34px;">Abbrevia</span><div class="b" style="left:1091px;top:124px;width:69px;height:29px;background:#efefee;border:1px solid #b6b6b5;border-bottom:1px solid #b0b0af;border-radius:3px 3px 0 0;background:linear-gradient(180deg,#eeeeed,#eaeae9)"></div><span class="t f1" style="left:1100px;top:130px;color:#2e3436;letter-spacing:-0.55px;">AggPas</span><div class="b" style="left:36px;top:122px;width:80px;height:32px;background:#fcfcfc;border:1px solid #b0b0af;border-bottom:none;border-radius:4px 4px 0 0"></div><span class="t f1" style="left:47.5px;top:129px;color:#2e3436;letter-spacing:-0.36px;">Standard</span><svg class="b" style="left:25px;top:132px;" width="6" height="10" viewBox="0 0 6 10"><path d="M5.5 0 V9.5 L0 4.75 Z" fill="#9a9d9e"/></svg><svg class="b" style="left:1166px;top:132.5px;" width="6" height="10" viewBox="0 0 6 10"><path d="M0 0 V9.5 L5.5 4.75 Z" fill="#2e3436"/></svg><svg class="b" style="left:32px;top:159px;" width="12" height="16" viewBox="0 0 12 16"><path d="M1.5 1.5 V13 L4.5 10.2 L6.8 15 L8.8 14 L6.6 9.5 H10.5 Z" fill="#fff" stroke="#000" stroke-width="1.2" stroke-linejoin="round"/></svg><svg class="b" style="left:68px;top:156px;" width="24" height="22" viewBox="0 0 24 22"><path d="M1 1.5 H22 L19 4.5 H1 Z" fill="#d8d8d8" stroke="#777" stroke-width="1"/><path d="M2.5 3 H6 M7.5 3 H11 M12.5 3 H16" stroke="#333" stroke-width="1.2"/><rect x="1.5" y="5" width="9.5" height="15.5" fill="#e6e6e6" stroke="#777" stroke-width="1"/><path d="M3 8 H8 M3 11 H8.5 M3 14 H7.5 M3 17.5 H9" stroke="#333" stroke-width="1.1"/></svg><svg class="b" style="left:97px;top:156px;" width="21" height="22" viewBox="0 0 21 22"><rect x="1.5" y="1.5" width="11" height="14" fill="#dcdcdc" stroke="#888" stroke-width="1"/><path d="M3 4 H8 M3 6.5 H9 M3 9 H8 M3 11.5 H9.5 M3 13.5 H8" stroke="#666" stroke-width="1"/><path d="M10.5 8 V19 L13.2 16.4 L15.2 21 L17.2 20 L15.2 15.6 H18.8 Z" fill="#fff" stroke="#000" stroke-width="1.1" stroke-linejoin="round"/></svg><div class="b" style="left:122px;top:159px;width:23px;height:14px;border:1.5px solid #5a86d0;border-radius:2.5px;background:linear-gradient(180deg,#fff,#dde4f4)"></div><span class="t f2" style="left:128.5px;top:162px;color:#444;letter-spacing:-0.41px;">Ok</span><span class="t f3" style="left:150.8px;top:160px;color:#2d5cc8;letter-spacing:-0.22px;">Abc</span><div class="b" style="left:151px;top:174px;width:7px;height:1px;background:#2d5cc8;"></div><div class="b" style="left:177px;top:159px;width:21px;height:15px;background:#fff;border-left:1.5px solid #888;border-top:1.5px solid #888;border-bottom:1px solid #ddd"></div><span class="t f4" style="left:179px;top:159px;color:#2d5cc8;letter-spacing:-1.05px;">ab</span><svg class="b" style="left:192px;top:161px;" width="5" height="12" viewBox="0 0 5 12"><path d="M.5 .5 H4.5 M2.5 .5 V11.5 M.5 11.5 H4.5" stroke="#111" stroke-width="1" fill="none"/></svg><svg class="b" style="left:206px;top:156px;" width="21" height="21" viewBox="0 0 21 21"><rect x="1" y="2.5" width="15" height="17" fill="#fff"/><path d="M1 20 V2.5 H16" stroke="#888" stroke-width="1.4" fill="none"/><path d="M3 6 H8 M3 9 H10 M3 12 H9 M3 15 H13 M3 17.5 H12" stroke="#111" stroke-width="1.2"/><path d="M9.5 12.5 L17.5 2.5 L20 4.5 L12 14.5 L9 15 Z" fill="#f0b850" stroke="#a87020" stroke-width=".7"/></svg><div class="b" style="left:231px;top:159px;width:22px;height:16px;background:#dcdfe4;border:1.5px solid #6a90c8;border-radius:3px"></div><span class="t f5" style="left:236px;top:161px;color:#555;letter-spacing:-0.3px;">on</span><svg class="b" style="left:263px;top:160px;" width="14" height="14" viewBox="0 0 14 14"><rect x=".7" y=".7" width="12.3" height="12.3" fill="#f4f4f4" stroke="#555" stroke-width="1.2"/><path d="M3 6.5 L5.8 9.5 L11 3.5" stroke="#2d5cc8" stroke-width="2.2" fill="none"/></svg><svg class="b" style="left:289.5px;top:159.5px;" width="14" height="14" viewBox="0 0 14 14"><circle cx="7" cy="7" r="6" fill="#f4f4f4" stroke="#555" stroke-width="1.1"/><path d="M7 4.5 L9.5 7 L7 9.5 L4.5 7 Z" fill="#2d6ad8"/></svg><svg class="b" style="left:313px;top:156.5px;" width="21" height="20" viewBox="0 0 21 20"><rect x="1" y="1" width="19" height="18" fill="#f6f6f6" stroke="#888" stroke-width="1.2"/><rect x="15" y="1.5" width="4.5" height="17" fill="#e0e0e0" stroke="#999" stroke-width=".6"/><rect x="1.5" y="8" width="13.5" height="4" fill="#d0d0d0"/><path d="M3.5 4 H12 M3.5 6.5 H12 M3.5 10 H10 M3.5 14 H12 M3.5 16.5 H12" stroke="#222" stroke-width="1.2"/><path d="M16 5 H18.5 L17.2 3.5 Z M16 15 H18.5 L17.2 16.5 Z" fill="#333"/></svg><svg class="b" style="left:339px;top:156.5px;" width="21" height="20" viewBox="0 0 21 20"><rect x="1" y="1" width="19" height="5" fill="#f6f6f6" stroke="#888" stroke-width="1.1"/><rect x="15.5" y="1.5" width="4" height="4" fill="#d8d8d8" stroke="#888" stroke-width=".6"/><path d="M16.3 2.8 H18.7 L17.5 4.4 Z" fill="#222"/><path d="M3 3.5 H12" stroke="#222" stroke-width="1.2"/><rect x="4" y="6.5" width="16" height="12.5" fill="#f6f6f6" stroke="#888" stroke-width="1.1"/><path d="M6.5 9.5 H17.5 M6.5 13 H17.5 M6.5 16.5 H17.5" stroke="#222" stroke-width="1.2"/></svg><svg class="b" style="left:367px;top:161.5px;" width="21" height="8" viewBox="0 0 21 8"><rect x=".7" y=".7" width="19.6" height="6.6" rx="1.5" fill="#d8d8d8" stroke="#777" stroke-width="1.1"/><rect x="5.5" y="1.5" width="10" height="5" fill="#f0f0f0" stroke="#999" stroke-width=".5" stroke-dasharray="1 1"/><path d="M4 2.3 L2.2 4 L4 5.7 M17 2.3 L18.8 4 L17 5.7" stroke="#222" stroke-width="1.1" fill="none"/></svg><svg class="b" style="left:393px;top:156px;" width="21" height="21" viewBox="0 0 21 21"><rect x="1" y="2.5" width="18" height="16.5" fill="#e4e4e2" stroke="#8a8a9a" stroke-width="1.2"/><path d="M1 19.6 H19.6 V3" stroke="#b8b8c0" stroke-width=".8" fill="none"/><rect x="4" y="1" width="7.5" height="2.6" fill="#6a9ae0"/></svg><svg class="b" style="left:420.5px;top:156px;" width="21" height="21" viewBox="0 0 21 21"><rect x="1" y="2.5" width="18" height="16.5" fill="#e4e4e2" stroke="#8a8a9a" stroke-width="1.2"/><path d="M1 19.6 H19.6 V3" stroke="#b8b8c0" stroke-width=".8" fill="none"/><rect x="4" y="1" width="7.5" height="2.6" fill="#6a9ae0"/><path d="M8 7.5 H16 M8 11.5 H16 M8 15.5 H16" stroke="#333" stroke-width="1.2"/><path d="M4 7.5 H6 M5 6.5 V8.5 M4 11.5 H6 M5 10.5 V12.5 M4 15.5 H6 M5 14.5 V16.5" stroke="#888" stroke-width=".9"/></svg><svg class="b" style="left:447.5px;top:156px;" width="21" height="21" viewBox="0 0 21 21"><rect x="1" y="2.5" width="18" height="16.5" fill="#e4e4e2" stroke="#8a8a9a" stroke-width="1.2"/><path d="M1 19.6 H19.6 V3" stroke="#b8b8c0" stroke-width=".8" fill="none"/><rect x="4" y="1" width="7.5" height="2.6" fill="#6a9ae0"/><path d="M8.5 7.5 H16 M8.5 11.5 H16 M8.5 15.5 H16" stroke="#333" stroke-width="1.2"/><path d="M4 7 L5.3 8.5 L7.2 6 M4 11 L5.3 12.5 L7.2 10 M4 15 L5.3 16.5 L7.2 14" stroke="#2d5cc8" stroke-width="1" fill="none"/></svg><svg class="b" style="left:474.5px;top:156px;" width="21" height="21" viewBox="0 0 21 21"><rect x="1" y="2.5" width="18" height="16.5" fill="#e4e4e2" stroke="#8a8a9a" stroke-width="1.2"/><path d="M1 19.6 H19.6 V3" stroke="#b8b8c0" stroke-width=".8" fill="none"/></svg><svg class="b" style="left:501px;top:156.5px;" width="23" height="21" viewBox="0 0 23 21"><rect x="1" y="1" width="21" height="19" fill="#dce8fa" stroke="#7aa4e4" stroke-width="1.1"/><rect x="1.7" y="1.7" width="19.6" height="3" fill="#9cc0f0"/><rect x="18.5" y="2" width="2" height="2" fill="#e06060"/><rect x="4" y="7.5" width="15" height="9" fill="#e4e4e4" stroke="#7a9ad0" stroke-width="1"/><path d="M5 9.5 H18 M5 11.5 H18 M5 13.5 H18 M5 15.5 H18" stroke="#aaa" stroke-width=".8" stroke-dasharray="1 1"/></svg><svg class="b" style="left:527px;top:155.5px;" width="24" height="23" viewBox="0 0 24 23"><path d="M1 1.5 H22 L19 4.5 H1 Z" fill="#d8d8d8" stroke="#777" stroke-width="1"/><path d="M2.5 3 H7 M8.5 3 H12 M13.5 3 H17" stroke="#333" stroke-width="1.2"/><rect x="1.5" y="5" width="9.5" height="15" fill="#eee" stroke="#777" stroke-width="1"/><path d="M3 8 H8 M3 11 H8.5 M3 14 H7.5 M3 17.5 H9" stroke="#333" stroke-width="1.1"/><rect x="10.5" y="11" width="12" height="10.5" rx="1.5" fill="#fff" stroke="#5a86d0" stroke-width="1.2"/></svg><span class="t f2" style="left:539px;top:167px;color:#222;letter-spacing:-0.66px;">Ok</span><svg class="b" style="left:1189.5px;top:122px;" width="10" height="12" viewBox="0 0 10 12"><path d="M5 .3 Q7.3 .3 7.3 3.4 Q9.3 6.4 9.2 9.4 L7 10.4 H3 L.8 9.4 Q.7 6.4 2.7 3.4 Q2.7 .3 5 .3 Z" fill="#111"/><path d="M5 4 Q7 5.6 6.9 9.6 H3.1 Q3 5.6 5 4 Z" fill="#fff"/><path d="M.2 9.6 L3.4 9 L3.2 11.4 H.6 Z M9.8 9.6 L6.6 9 L6.8 11.4 H9.4 Z" fill="#f4c000"/><path d="M4.2 3.3 H5.8 L5 4.3 Z" fill="#f4c000"/></svg><span class="t f6" style="left:1188.5px;top:132px;color:#000;letter-spacing:-0.09px;">64</span><svg class="b" style="left:1184px;top:152.5px;" width="21" height="18" viewBox="0 0 21 18"><defs><linearGradient id="gba" x1="0" y1="0" x2="0" y2="1"><stop offset="0" stop-color="#8cc4f4"/><stop offset=".6" stop-color="#2a80d8"/><stop offset="1" stop-color="#7ac0f0"/></linearGradient></defs><path d="M6 .8 H15 V7.5 H20 L10.5 17 L1 7.5 H6 Z" fill="url(#gba)" stroke="#1d62b0" stroke-width=".9" stroke-linejoin="round"/></svg>
<!-- p_oi -->
<div class="b" style="left:15px;top:185px;width:1194px;height:5px;background:#f1f1f0;"></div><div class="b" style="left:15px;top:190px;width:1194px;height:1px;background:#a9a9a8;"></div><div class="b" style="left:15px;top:191px;width:263px;height:20px;background:#fefeb8;border-bottom:1px solid #e4e4b0"></div><span class="t f7" style="left:86px;top:191px;color:#3a3a30;letter-spacing:-0.04px;">Object Inspector</span><svg class="b" style="left:267px;top:196px;" width="10" height="10" viewBox="0 0 10 10"><path d="M1.2 1.2 L8.8 8.8 M8.8 1.2 L1.2 8.8" stroke="#111" stroke-width="2.3" fill="none"/></svg><div class="b" style="left:15px;top:211px;width:264px;height:236px;background:#f1f1f0;"></div><span class="t f7" style="left:18.3px;top:220px;color:#111;letter-spacing:-0.21px;">Components</span><div class="b" style="left:36.5px;top:236px;width:11px;height:1px;background:#111;"></div><div class="b" style="left:106px;top:212px;width:142px;height:35px;background:#fff;border:1px solid #a9a9a7;border-radius:3.5px;box-shadow:inset 0 1px 1px rgba(0,0,0,.07)"></div><span class="t f7" style="left:117.3px;top:220px;color:#1c1c1c;letter-spacing:0.07px;">(filter)</span><div class="b" style="left:254px;top:212px;width:21px;height:35px;border:1px solid #b4b4b2;border-radius:4px;background:linear-gradient(180deg,#f4f4f3,#e2e2e1)"></div><svg class="b" style="left:256.5px;top:223px;" width="17" height="15" viewBox="0 0 17 15"><path d="M.5 .8 H14.5 L9.5 6.5 V12.5 L6 10.5 V6.5 Z" fill="#a8abac" stroke="#888b8c" stroke-width=".8"/><path d="M9.5 8.5 L15.5 14 M15.5 8.5 L9.5 14" stroke="#8a8d8e" stroke-width="2"/></svg><div class="b" style="left:18px;top:251px;width:258px;height:118px;background:#fff;border:1px solid #b4b4b2"></div><div class="b" style="left:52px;top:252px;width:105px;height:22px;background:#4a90d9;"></div><div class="b" style="left:19px;top:252px;width:244px;height:103px;overflow:hidden"><span class="t f7" style="left:36px;top:2px;color:#1a3050;letter-spacing:-0.35px;">Form1: TForm1</span><span class="t f7" style="left:51px;top:24px;color:#2e3436;letter-spacing:-0.15px;">SpkToolbar1: TSpkToolbar</span><span class="t f7" style="left:66px;top:46px;color:#2e3436;letter-spacing:-0.3px;">SpkTab1: TSpkTab</span><span class="t f7" style="left:81px;top:68px;color:#2e3436;letter-spacing:-0.5px;">SpkPane1: TSpkPane</span><span class="t f7" style="left:96px;top:90px;color:#2e3436;letter-spacing:-0.3px;">SpkLargeButton1: TSpk</span><div class="b" style="left:7px;top:0px;width:1px;height:8px;background:repeating-linear-gradient(180deg,#5c6ea8 0,#5c6ea8 1px,transparent 1px,transparent 2px)"></div><div class="b" style="left:22px;top:22px;width:1px;height:8px;background:repeating-linear-gradient(180deg,#5c6ea8 0,#5c6ea8 1px,transparent 1px,transparent 2px)"></div><div class="b" style="left:37px;top:44px;width:1px;height:8px;background:repeating-linear-gradient(180deg,#5c6ea8 0,#5c6ea8 1px,transparent 1px,transparent 2px)"></div><div class="b" style="left:52px;top:66px;width:1px;height:8px;background:repeating-linear-gradient(180deg,#5c6ea8 0,#5c6ea8 1px,transparent 1px,transparent 2px)"></div><div class="b" style="left:22px;top:40px;width:1px;height:68px;background:repeating-linear-gradient(180deg,#5c6ea8 0,#5c6ea8 1px,transparent 1px,transparent 2px)"></div><div class="b" style="left:52px;top:84px;width:1px;height:24px;background:repeating-linear-gradient(180deg,#5c6ea8 0,#5c6ea8 1px,transparent 1px,transparent 2px)"></div><div class="b" style="left:67px;top:88px;width:1px;height:12px;background:repeating-linear-gradient(180deg,#5c6ea8 0,#5c6ea8 1px,transparent 1px,transparent 2px)"></div><div class="b" style="left:67px;top:99px;width:8px;height:1px;background:repeating-linear-gradient(90deg,#5c6ea8 0,#5c6ea8 1px,transparent 1px,transparent 2px)"></div><svg class="b" style="left:2.8px;top:9.5px;" width="10" height="6" viewBox="0 0 10 6"><path d="M0 0 H9.4 L4.7 5.4 Z" fill="#2e3436"/></svg><svg class="b" style="left:17.8px;top:31.5px;" width="10" height="6" viewBox="0 0 10 6"><path d="M0 0 H9.4 L4.7 5.4 Z" fill="#2e3436"/></svg><svg class="b" style="left:32.8px;top:53.5px;" width="10" height="6" viewBox="0 0 10 6"><path d="M0 0 H9.4 L4.7 5.4 Z" fill="#2e3436"/></svg><svg class="b" style="left:47.8px;top:75.5px;" width="10" height="6" viewBox="0 0 10 6"><path d="M0 0 H9.4 L4.7 5.4 Z" fill="#2e3436"/></svg><svg class="b" style="left:16px;top:4px;" width="15" height="14" viewBox="0 0 15 14"><rect x=".5" y=".5" width="14" height="13" fill="#e8e8e0" stroke="#6a8ad0" stroke-width="1"/><rect x="1" y="1" width="13" height="2" fill="#c8d8f4"/></svg><svg class="b" style="left:31px;top:26px;" width="15" height="14" viewBox="0 0 15 14"><rect x=".5" y=".5" width="14" height="13" fill="#f4f6fc" stroke="#5a80c8" stroke-width="1"/><rect x="1" y="1" width="13" height="2.5" fill="#a8c0ec"/><rect x="3" y="6" width="8.5" height="5" rx="1" fill="#dfe6f6" stroke="#5a80c8" stroke-width="1"/></svg><svg class="b" style="left:46px;top:47px;" width="17" height="16" viewBox="0 0 17 16"><path d="M4.5 5.7 L8.8 7.635 L8.8 12.365 L4.5 14.3 L0.20000000000000018 12.365 L0.20000000000000018 7.635 Z" fill="#58a858" stroke="#3a7a3a" stroke-width=".7"/><path d="M4.5 5.7 L8.8 7.635 L4.5 10 L0.20000000000000018 7.635 Z" fill="#a8d8a0"/><path d="M4.5 10 L8.8 7.635 L8.8 12.365 L4.5 14.3 Z" fill="#3a7a3a" opacity=".55"/><path d="M11.5 6.8999999999999995 L15.8 8.834999999999999 L15.8 13.565 L11.5 15.5 L7.2 13.565 L7.2 8.834999999999999 Z" fill="#4a88d0" stroke="#2a62a8" stroke-width=".7"/><path d="M11.5 6.8999999999999995 L15.8 8.834999999999999 L11.5 11.2 L7.2 8.834999999999999 Z" fill="#a0c8f0"/><path d="M11.5 11.2 L15.8 8.834999999999999 L15.8 13.565 L11.5 15.5 Z" fill="#2a62a8" opacity=".55"/><path d="M8.5 0.6000000000000005 L13.1 2.6700000000000004 L13.1 7.73 L8.5 9.8 L3.9000000000000004 7.73 L3.9000000000000004 2.6700000000000004 Z" fill="#e04040" stroke="#b02020" stroke-width=".7"/><path d="M8.5 0.6000000000000005 L13.1 2.6700000000000004 L8.5 5.2 L3.9000000000000004 2.6700000000000004 Z" fill="#f4a0a0"/><path d="M8.5 5.2 L13.1 2.6700000000000004 L13.1 7.73 L8.5 9.8 Z" fill="#b02020" opacity=".55"/></svg><svg class="b" style="left:61px;top:69px;" width="17" height="16" viewBox="0 0 17 16"><path d="M4.5 5.7 L8.8 7.635 L8.8 12.365 L4.5 14.3 L0.20000000000000018 12.365 L0.20000000000000018 7.635 Z" fill="#58a858" stroke="#3a7a3a" stroke-width=".7"/><path d="M4.5 5.7 L8.8 7.635 L4.5 10 L0.20000000000000018 7.635 Z" fill="#a8d8a0"/><path d="M4.5 10 L8.8 7.635 L8.8 12.365 L4.5 14.3 Z" fill="#3a7a3a" opacity=".55"/><path d="M11.5 6.8999999999999995 L15.8 8.834999999999999 L15.8 13.565 L11.5 15.5 L7.2 13.565 L7.2 8.834999999999999 Z" fill="#4a88d0" stroke="#2a62a8" stroke-width=".7"/><path d="M11.5 6.8999999999999995 L15.8 8.834999999999999 L11.5 11.2 L7.2 8.834999999999999 Z" fill="#a0c8f0"/><path d="M11.5 11.2 L15.8 8.834999999999999 L15.8 13.565 L11.5 15.5 Z" fill="#2a62a8" opacity=".55"/><path d="M8.5 0.6000000000000005 L13.1 2.6700000000000004 L13.1 7.73 L8.5 9.8 L3.9000000000000004 7.73 L3.9000000000000004 2.6700000000000004 Z" fill="#e04040" stroke="#b02020" stroke-width=".7"/><path d="M8.5 0.6000000000000005 L13.1 2.6700000000000004 L8.5 5.2 L3.9000000000000004 2.6700000000000004 Z" fill="#f4a0a0"/><path d="M8.5 5.2 L13.1 2.6700000000000004 L13.1 7.73 L8.5 9.8 Z" fill="#b02020" opacity=".55"/></svg><svg class="b" style="left:76px;top:91px;" width="17" height="16" viewBox="0 0 17 16"><path d="M4.5 5.7 L8.8 7.635 L8.8 12.365 L4.5 14.3 L0.20000000000000018 12.365 L0.20000000000000018 7.635 Z" fill="#58a858" stroke="#3a7a3a" stroke-width=".7"/><path d="M4.5 5.7 L8.8 7.635 L4.5 10 L0.20000000000000018 7.635 Z" fill="#a8d8a0"/><path d="M4.5 10 L8.8 7.635 L8.8 12.365 L4.5 14.3 Z" fill="#3a7a3a" opacity=".55"/><path d="M11.5 6.8999999999999995 L15.8 8.834999999999999 L15.8 13.565 L11.5 15.5 L7.2 13.565 L7.2 8.834999999999999 Z" fill="#4a88d0" stroke="#2a62a8" stroke-width=".7"/><path d="M11.5 6.8999999999999995 L15.8 8.834999999999999 L11.5 11.2 L7.2 8.834999999999999 Z" fill="#a0c8f0"/><path d="M11.5 11.2 L15.8 8.834999999999999 L15.8 13.565 L11.5 15.5 Z" fill="#2a62a8" opacity=".55"/><path d="M8.5 0.6000000000000005 L13.1 2.6700000000000004 L13.1 7.73 L8.5 9.8 L3.9000000000000004 7.73 L3.9000000000000004 2.6700000000000004 Z" fill="#e04040" stroke="#b02020" stroke-width=".7"/><path d="M8.5 0.6000000000000005 L13.1 2.6700000000000004 L8.5 5.2 L3.9000000000000004 2.6700000000000004 Z" fill="#f4a0a0"/><path d="M8.5 5.2 L13.1 2.6700000000000004 L13.1 7.73 L8.5 9.8 Z" fill="#b02020" opacity=".55"/></svg></div><div class="b" style="left:263px;top:252px;width:12px;height:103px;background:#c4c4c3;"></div><div class="b" style="left:266px;top:255px;width:6px;height:42px;background:#7c7e7f;border-radius:3px"></div><div class="b" style="left:263px;top:355px;width:12px;height:13px;background:#ecebea;"></div><div class="b" style="left:19px;top:355px;width:244px;height:13px;background:#c4c4c3;"></div><div class="b" style="left:22px;top:359px;width:165px;height:6px;background:#7c7e7f;border-radius:3px"></div><span class="t f7" style="left:20px;top:385px;color:#111;letter-spacing:-0.13px;">Properties</span><div class="b" style="left:20px;top:401px;width:9px;height:1px;background:#111;"></div><div class="b" style="left:92px;top:377px;width:156px;height:35px;background:#fff;border:1px solid #a9a9a7;border-radius:3.5px;box-shadow:inset 0 1px 1px rgba(0,0,0,.07)"></div><span class="t f7" style="left:103px;top:385px;color:#1c1c1c;letter-spacing:0.07px;">(filter)</span><div class="b" style="left:254px;top:377px;width:21px;height:35px;border:1px solid #b4b4b2;border-radius:4px;background:linear-gradient(180deg,#f4f4f3,#e2e2e1)"></div><svg class="b" style="left:256.5px;top:388px;" width="17" height="15" viewBox="0 0 17 15"><path d="M.5 .8 H14.5 L9.5 6.5 V12.5 L6 10.5 V6.5 Z" fill="#a8abac" stroke="#888b8c" stroke-width=".8"/><path d="M9.5 8.5 L15.5 14 M15.5 8.5 L9.5 14" stroke="#8a8d8e" stroke-width="2"/></svg><div class="b" style="left:15px;top:445px;width:264px;height:439px;border:1px solid #b0b0af;border-top:1px solid #b0b0af"></div><div class="b" style="left:120px;top:418px;width:64px;height:28px;border:1px solid #b6b6b5;border-radius:4px 4px 0 0;background:linear-gradient(180deg,#eeeeed,#e9e9e8)"></div><span class="t f7" style="left:129.7px;top:423px;color:#2e3436;letter-spacing:-0.59px;">Events</span><div class="b" style="left:183px;top:418px;width:81px;height:28px;border:1px solid #b6b6b5;border-radius:4px 4px 0 0;background:linear-gradient(180deg,#eeeeed,#e9e9e8)"></div><span class="t f7" style="left:192.5px;top:423px;color:#2e3436;letter-spacing:-0.42px;">Favorites</span><div class="b" style="left:31.5px;top:416px;width:89.5px;height:31px;background:#fcfcfc;border:1px solid #b0b0af;border-bottom:none;border-radius:4px 4px 0 0"></div><span class="t f7" style="left:43.3px;top:422px;color:#2e3436;letter-spacing:-0.18px;">Properties</span><svg class="b" style="left:20px;top:425px;" width="6" height="10" viewBox="0 0 6 10"><path d="M5.5 0 V9.6 L0 4.8 Z" fill="#9a9d9e"/></svg><svg class="b" style="left:269px;top:425px;" width="6" height="10" viewBox="0 0 6 10"><path d="M0 0 V9.6 L5.5 4.8 Z" fill="#2e3436"/></svg><div class="b" style="left:20px;top:447px;width:255px;height:436px;background:#f0f0ef;border:1px solid #a8a8a7"></div><div class="b" style="left:21px;top:448px;width:253px;height:434px;overflow:hidden"><div class="b" style="left:21px;top:0px;width:1px;height:434px;background:#a8a8a7;"></div><div class="b" style="left:108px;top:0px;width:1px;height:434px;background:#a8a8a7;"></div><div class="b" style="left:22px;top:0px;width:86px;height:21px;overflow:hidden"><span class="t f7" style="left:2.3px;top:2px;color:#960c0c;letter-spacing:-0.42px;">Action</span></div><div class="b" style="left:109px;top:0px;width:130px;height:21px;overflow:hidden"></div><div class="b" style="left:22px;top:21px;width:217px;height:1px;background:repeating-linear-gradient(90deg,#b0b0b0 0,#b0b0b0 1px,transparent 1px,transparent 2px)"></div><div class="b" style="left:22px;top:22px;width:86px;height:21px;overflow:hidden"><span class="t f7" style="left:2.3px;top:2px;color:#960c0c;letter-spacing:-0.1px;">ActiveContro</span></div><div class="b" style="left:109px;top:22px;width:130px;height:21px;overflow:hidden"></div><div class="b" style="left:22px;top:43px;width:217px;height:1px;background:repeating-linear-gradient(90deg,#b0b0b0 0,#b0b0b0 1px,transparent 1px,transparent 2px)"></div><div class="b" style="left:22px;top:44px;width:86px;height:21px;overflow:hidden"><span class="t f7" style="left:2.3px;top:2px;color:#000;letter-spacing:-0.38px;">Align</span></div><div class="b" style="left:109px;top:44px;width:130px;height:21px;overflow:hidden"><span class="t f7" style="left:4px;top:2px;color:#000;letter-spacing:-0.24px;">alNone</span></div><div class="b" style="left:22px;top:65px;width:217px;height:1px;background:repeating-linear-gradient(90deg,#b0b0b0 0,#b0b0b0 1px,transparent 1px,transparent 2px)"></div><div class="b" style="left:22px;top:66px;width:86px;height:21px;overflow:hidden"><span class="t f7" style="left:2.3px;top:2px;color:#000;letter-spacing:0.12px;">AllowDropFil</span></div><div class="b" style="left:109px;top:66px;width:130px;height:21px;overflow:hidden"><div class="b" style="left:3px;top:3.5px;width:14px;height:14px;border:1px solid #a0a0a0;border-radius:3px;background:linear-gradient(180deg,#fbfbfb,#e4e4e3)"></div><span class="t f7" style="left:22.5px;top:2px;color:#000;letter-spacing:-0.44px;">(False)</span></div><div class="b" style="left:22px;top:87px;width:217px;height:1px;background:repeating-linear-gradient(90deg,#b0b0b0 0,#b0b0b0 1px,transparent 1px,transparent 2px)"></div><div class="b" style="left:22px;top:88px;width:86px;height:21px;overflow:hidden"><span class="t f7" style="left:2.3px;top:2px;color:#000;letter-spacing:-0.28px;">AlphaBlend</span></div><div class="b" style="left:109px;top:88px;width:130px;height:21px;overflow:hidden"><div class="b" style="left:3px;top:3.5px;width:14px;height:14px;border:1px solid #a0a0a0;border-radius:3px;background:linear-gradient(180deg,#fbfbfb,#e4e4e3)"></div><span class="t f7" style="left:22.5px;top:2px;color:#000;letter-spacing:-0.44px;">(False)</span></div><div class="b" style="left:22px;top:109px;width:217px;height:1px;background:repeating-linear-gradient(90deg,#b0b0b0 0,#b0b0b0 1px,transparent 1px,transparent 2px)"></div><div class="b" style="left:22px;top:110px;width:86px;height:21px;overflow:hidden"><span class="t f7" style="left:2.3px;top:2px;color:#000;letter-spacing:-0.34px;">AlphaBlendVa</span></div><div class="b" style="left:109px;top:110px;width:130px;height:21px;overflow:hidden"><span class="t f7" style="left:4px;top:2px;color:#000;letter-spacing:-0.16px;">255</span></div><div class="b" style="left:22px;top:131px;width:217px;height:1px;background:repeating-linear-gradient(90deg,#b0b0b0 0,#b0b0b0 1px,transparent 1px,transparent 2px)"></div><div class="b" style="left:22px;top:132px;width:86px;height:21px;overflow:hidden"><span class="t f7" style="left:2.3px;top:2px;color:#000;letter-spacing:-0.44px;">Anchors</span></div><div class="b" style="left:109px;top:132px;width:130px;height:21px;overflow:hidden"><span class="t f7" style="left:4px;top:2px;color:#000;letter-spacing:-0.05px;">[akTop,akLeft]</span></div><svg class="b" style="left:8px;top:138px;" width="6" height="10" viewBox="0 0 6 10"><path d="M0 0 V9.6 L5.4 4.8 Z" fill="#2e3436"/></svg><div class="b" style="left:22px;top:153px;width:217px;height:1px;background:repeating-linear-gradient(90deg,#b0b0b0 0,#b0b0b0 1px,transparent 1px,transparent 2px)"></div><div class="b" style="left:22px;top:154px;width:86px;height:21px;overflow:hidden"><span class="t f7" style="left:2.3px;top:2px;color:#000;letter-spacing:-0.06px;">AutoScroll</span></div><div class="b" style="left:109px;top:154px;width:130px;height:21px;overflow:hidden"><div class="b" style="left:3px;top:3.5px;width:14px;height:14px;border:1px solid #a0a0a0;border-radius:3px;background:linear-gradient(180deg,#fbfbfb,#e4e4e3)"></div><span class="t f7" style="left:22.5px;top:2px;color:#000;letter-spacing:-0.44px;">(False)</span></div><div class="b" style="left:22px;top:175px;width:217px;height:1px;background:repeating-linear-gradient(90deg,#b0b0b0 0,#b0b0b0 1px,transparent 1px,transparent 2px)"></div><div class="b" style="left:22px;top:176px;width:86px;height:21px;overflow:hidden"><span class="t f7" style="left:2.3px;top:2px;color:#000;letter-spacing:-0.37px;">AutoSize</span></div><div class="b" style="left:109px;top:176px;width:130px;height:21px;overflow:hidden"><div class="b" style="left:3px;top:3.5px;width:14px;height:14px;border:1px solid #a0a0a0;border-radius:3px;background:linear-gradient(180deg,#fbfbfb,#e4e4e3)"></div><span class="t f7" style="left:22.5px;top:2px;color:#000;letter-spacing:-0.44px;">(False)</span></div><div class="b" style="left:22px;top:197px;width:217px;height:1px;background:repeating-linear-gradient(90deg,#b0b0b0 0,#b0b0b0 1px,transparent 1px,transparent 2px)"></div><div class="b" style="left:22px;top:198px;width:86px;height:21px;overflow:hidden"><span class="t f7" style="left:2.3px;top:2px;color:#000;letter-spacing:-0.48px;">BiDiMode</span></div><div class="b" style="left:109px;top:198px;width:130px;height:21px;overflow:hidden"><span class="t f7" style="left:4px;top:2px;color:#000;letter-spacing:-0.03px;">bdLeftToRight</span></div><div class="b" style="left:22px;top:219px;width:217px;height:1px;background:repeating-linear-gradient(90deg,#b0b0b0 0,#b0b0b0 1px,transparent 1px,transparent 2px)"></div><div class="b" style="left:22px;top:220px;width:86px;height:21px;overflow:hidden"><span class="t f7" style="left:2.3px;top:2px;color:#000;letter-spacing:-0.26px;">BorderIcons</span></div><div class="b" style="left:109px;top:220px;width:130px;height:21px;overflow:hidden"><span class="t f7" style="left:4px;top:2px;color:#000;letter-spacing:-0.13px;">[biSystemMenu,biM</span></div><svg class="b" style="left:8px;top:226px;" width="6" height="10" viewBox="0 0 6 10"><path d="M0 0 V9.6 L5.4 4.8 Z" fill="#2e3436"/></svg><div class="b" style="left:22px;top:241px;width:217px;height:1px;background:repeating-linear-gradient(90deg,#b0b0b0 0,#b0b0b0 1px,transparent 1px,transparent 2px)"></div><div class="b" style="left:22px;top:242px;width:86px;height:21px;overflow:hidden"><span class="t f7" style="left:2.3px;top:2px;color:#000;letter-spacing:-0.08px;">BorderStyle</span></div><div class="b" style="left:109px;top:242px;width:130px;height:21px;overflow:hidden"><span class="t f7" style="left:4px;top:2px;color:#000;letter-spacing:-0.37px;">bsSizeable</span></div><div class="b" style="left:22px;top:263px;width:217px;height:1px;background:repeating-linear-gradient(90deg,#b0b0b0 0,#b0b0b0 1px,transparent 1px,transparent 2px)"></div><div class="b" style="left:22px;top:264px;width:86px;height:21px;overflow:hidden"><span class="t f7" style="left:2.3px;top:2px;color:#000;letter-spacing:-0.16px;">BorderWidth</span></div><div class="b" style="left:109px;top:264px;width:130px;height:21px;overflow:hidden"><span class="t f7" style="left:4px;top:2px;color:#000;">0</span></div><div class="b" style="left:22px;top:285px;width:217px;height:1px;background:repeating-linear-gradient(90deg,#b0b0b0 0,#b0b0b0 1px,transparent 1px,transparent 2px)"></div><div class="b" style="left:22px;top:286px;width:86px;height:21px;overflow:hidden"><span class="t f7" style="left:2.3px;top:2px;color:#000;letter-spacing:-0.33px;">Caption</span></div><div class="b" style="left:109px;top:286px;width:130px;height:21px;overflow:hidden"><span class="t f7" style="left:4px;top:2px;color:#000;letter-spacing:-0.02px;">spkToolbar Styles</span></div><div class="b" style="left:22px;top:307px;width:217px;height:1px;background:repeating-linear-gradient(90deg,#b0b0b0 0,#b0b0b0 1px,transparent 1px,transparent 2px)"></div><div class="b" style="left:22px;top:308px;width:86px;height:21px;overflow:hidden"><span class="t f7" style="left:2.3px;top:2px;color:#000;letter-spacing:-0.28px;">ChildSizing</span></div><div class="b" style="left:109px;top:308px;width:130px;height:21px;overflow:hidden"><span class="t f7" style="left:4px;top:2px;color:#000;letter-spacing:-0.12px;">(TControlChildSizing</span></div><svg class="b" style="left:8px;top:314px;" width="6" height="10" viewBox="0 0 6 10"><path d="M0 0 V9.6 L5.4 4.8 Z" fill="#2e3436"/></svg><div class="b" style="left:22px;top:329px;width:217px;height:1px;background:repeating-linear-gradient(90deg,#b0b0b0 0,#b0b0b0 1px,transparent 1px,transparent 2px)"></div><div class="b" style="left:22px;top:330px;width:86px;height:21px;overflow:hidden"><span class="t f7" style="left:2.3px;top:2px;color:#000;letter-spacing:-0.07px;">Color</span></div><div class="b" style="left:109px;top:330px;width:130px;height:21px;overflow:hidden"><div class="b" style="left:2px;top:2px;width:17px;height:17px;background:#a0a0a4;"></div><span class="t f0" style="left:23px;top:2px;color:#960c0c;letter-spacing:-0.16px;">clMedGray</span></div><div class="b" style="left:22px;top:351px;width:217px;height:1px;background:repeating-linear-gradient(90deg,#b0b0b0 0,#b0b0b0 1px,transparent 1px,transparent 2px)"></div><div class="b" style="left:22px;top:352px;width:86px;height:21px;overflow:hidden"><span class="t f7" style="left:2.3px;top:2px;color:#000;letter-spacing:-0.18px;">Constraints</span></div><div class="b" style="left:109px;top:352px;width:130px;height:21px;overflow:hidden"><span class="t f7" style="left:4px;top:2px;color:#000;letter-spacing:-0.24px;">(TSizeConstraints)</span></div><svg class="b" style="left:8px;top:358px;" width="6" height="10" viewBox="0 0 6 10"><path d="M0 0 V9.6 L5.4 4.8 Z" fill="#2e3436"/></svg><div class="b" style="left:22px;top:373px;width:217px;height:1px;background:repeating-linear-gradient(90deg,#b0b0b0 0,#b0b0b0 1px,transparent 1px,transparent 2px)"></div><div class="b" style="left:22px;top:374px;width:86px;height:21px;overflow:hidden"><span class="t f7" style="left:2.3px;top:2px;color:#000;letter-spacing:-0.3px;">Cursor</span></div><div class="b" style="left:109px;top:374px;width:130px;height:21px;overflow:hidden"><span class="t f7" style="left:4px;top:2px;color:#000;letter-spacing:0.04px;">crDefault</span></div><div class="b" style="left:22px;top:395px;width:217px;height:1px;background:repeating-linear-gradient(90deg,#b0b0b0 0,#b0b0b0 1px,transparent 1px,transparent 2px)"></div><div class="b" style="left:22px;top:396px;width:86px;height:21px;overflow:hidden"><span class="t f7" style="left:2.3px;top:2px;color:#000;letter-spacing:0.03px;">DefaultMonit</span></div><div class="b" style="left:109px;top:396px;width:130px;height:21px;overflow:hidden"><span class="t f7" style="left:4px;top:2px;color:#000;letter-spacing:-0.25px;">dmActiveForm</span></div><div class="b" style="left:22px;top:417px;width:217px;height:1px;background:repeating-linear-gradient(90deg,#b0b0b0 0,#b0b0b0 1px,transparent 1px,transparent 2px)"></div><div class="b" style="left:22px;top:418px;width:86px;height:21px;overflow:hidden"><span class="t f7" style="left:2.3px;top:2px;color:#000;letter-spacing:-0.38px;">DesignTimeP</span></div><div class="b" style="left:109px;top:418px;width:130px;height:21px;overflow:hidden"><span class="t f7" style="left:4px;top:2px;color:#000;letter-spacing:-0.16px;">96</span></div><div class="b" style="left:22px;top:439px;width:217px;height:1px;background:repeating-linear-gradient(90deg,#b0b0b0 0,#b0b0b0 1px,transparent 1px,transparent 2px)"></div></div><div class="b" style="left:260px;top:448px;width:14px;height:434px;background:#c0c0bf;"></div><div class="b" style="left:264.5px;top:451px;width:6px;height:146px;background:#7c7e7f;border-radius:3px"></div><div class="b" style="left:15px;top:888px;width:264px;height:52px;background:#f1f1f0;"></div>
<!-- p_editor -->
<div class="b" style="left:283px;top:191px;width:21.3px;height:692px;background:#fefeb8;border-left:1px solid #d8d8c0"></div><svg class="b" style="left:289px;top:193px;" width="10" height="10" viewBox="0 0 10 10"><path d="M1.2 1.2 L8.8 8.8 M8.8 1.2 L1.2 8.8" stroke="#111" stroke-width="2.3" fill="none"/></svg><div class="b" style="left:283px;top:480.3px;width:21px;height:130px;"><span style="position:absolute;left:9px;top:65px;transform:translate(-50%,-50%) rotate(-90deg);white-space:pre;font-size:14.67px;letter-spacing:-0.2px;color:#3a3a30;line-height:20px">Source Editor</span></div><svg class="b" style="left:310px;top:195px;" width="14" height="16" viewBox="0 0 14 16"><rect x=".5" y=".5" width="12.5" height="14.5" fill="#dce8f8" stroke="#6a8ac8" stroke-width="1"/><rect x="1" y="1" width="11.5" height="2.5" fill="#a0bcec"/><path d="M6.7 5.5 L11.5 10 H10 V14 H3.5 V10 H2 Z" fill="#d02020"/><rect x="5.7" y="11" width="2" height="3" fill="#fff"/></svg><svg class="b" style="left:330px;top:201px;" width="10" height="6" viewBox="0 0 10 6"><path d="M0 0 H9.4 L4.7 5.2 Z" fill="#2e3436"/></svg><svg class="b" style="left:344.5px;top:195px;" width="15" height="16" viewBox="0 0 15 16"><rect x="3" y="1" width="10" height="14" fill="#dce6f4" stroke="#8aa0c8" stroke-width=".8"/><path d="M1 8 L6.5 3 V6 H13.5 V10 H6.5 V13 Z" fill="#7ab6f6" stroke="#0a0a14" stroke-width="1.3" stroke-linejoin="round"/></svg><svg class="b" style="left:368.5px;top:195px;" width="15" height="16" viewBox="0 0 15 16"><g transform="translate(15,0) scale(-1,1)"><rect x="3" y="1" width="10" height="14" fill="#dce6f4" stroke="#8aa0c8" stroke-width=".8"/><path d="M1 8 L6.5 3 V6 H13.5 V10 H6.5 V13 Z" fill="#7ab6f6" stroke="#0a0a14" stroke-width="1.3" stroke-linejoin="round"/></g></svg><div class="b" style="left:387px;top:193px;width:1px;height:20px;background:#d4d4d3;"></div><div class="b" style="left:388px;top:193px;width:1px;height:20px;background:#f6f6f5;"></div><div class="b" style="left:305px;top:252px;width:904px;height:610px;background:#fcfcfc;border:1px solid #b0b0af;border-right:none;border-bottom-color:#b4b4b3"></div><div class="b" style="left:310px;top:254px;width:894.5px;height:607px;background:#e8e8e7;border:1px solid #a8a8a7;border-top:none"></div><div class="b" style="left:306px;top:253px;width:898px;height:1px;background:#fbfbfb;"></div><div class="b" style="left:305px;top:214px;width:118px;height:40px;background:#fcfcfc;border:1px solid #b0b0af;border-bottom:none;border-radius:4px 4px 0 0"></div><span class="t f7" style="left:314.3px;top:225px;color:#2e3436;letter-spacing:0.11px;">stylesunit1</span><svg class="b" style="left:395.5px;top:228.5px;" width="11" height="11" viewBox="0 0 11 11"><path d="M1.5 1.5 L9.5 9.5 M9.5 1.5 L1.5 9.5" stroke="#888a85" stroke-width="2.4" fill="none"/></svg><div class="b" style="left:310px;top:254px;width:894px;height:575px;background:#fff;border:1px solid #a8a8a7"></div><div class="b" style="left:314px;top:256px;width:1px;height:572px;background:#c8c8c8;"></div><div class="b" style="left:316px;top:257px;width:856px;height:557px;background:#000;overflow:hidden"><div class="b" style="left:51px;top:0px;width:1px;height:557px;background:#8a8a8a;"></div><div class="b" style="left:68px;top:120.5px;width:70.5px;height:14.5px;background:#323232;border:1px solid #a0a0a0"></div><span class="t f8" style="left:38.3px;top:-2px;color:#f4f4f4;letter-spacing:-0.8px;">1</span><span class="t f9" style="left:54.5px;top:-2px;color:#5fb3a8;letter-spacing:-0.8px;">unit</span><span class="t f8" style="left:89.5px;top:-2px;color:#ffffff;letter-spacing:-0.8px;">stylesunit1</span><span class="t f8" style="left:166.5px;top:-2px;color:#00d0d0;letter-spacing:-0.8px;">;</span><div class="b" style="left:40.6px;top:23px;width:2px;height:2px;background:#e0e0e0;"></div><div class="b" style="left:40.6px;top:38px;width:2px;height:2px;background:#e0e0e0;"></div><span class="t f8" style="left:54.5px;top:28px;color:#00e000;letter-spacing:-0.8px;">{$mode objfpc}{$H+}</span><div class="b" style="left:40.6px;top:53px;width:2px;height:2px;background:#e0e0e0;"></div><span class="t f8" style="left:38.3px;top:58px;color:#f4f4f4;letter-spacing:-0.8px;">5</span><span class="t f9" style="left:54.5px;top:58px;color:#5fb3a8;letter-spacing:-0.8px;">interface</span><div class="b" style="left:40.6px;top:83px;width:2px;height:2px;background:#e0e0e0;"></div><div class="b" style="left:40.6px;top:98px;width:2px;height:2px;background:#e0e0e0;"></div><span class="t f9" style="left:54.5px;top:88px;color:#5fb3a8;letter-spacing:-0.8px;">uses</span><div class="b" style="left:40.6px;top:113px;width:2px;height:2px;background:#e0e0e0;"></div><span class="t f8" style="left:68.5px;top:103px;color:#ffffff;letter-spacing:-0.8px;">Classes</span><span class="t f8" style="left:117.5px;top:103px;color:#00d0d0;letter-spacing:-0.8px;">,</span><span class="t f8" style="left:131.5px;top:103px;color:#ffffff;letter-spacing:-0.8px;">SysUtils</span><span class="t f8" style="left:187.5px;top:103px;color:#00d0d0;letter-spacing:-0.8px;">,</span><span class="t f8" style="left:201.5px;top:103px;color:#ffffff;letter-spacing:-0.8px;">FileUtil</span><span class="t f8" style="left:257.5px;top:103px;color:#00d0d0;letter-spacing:-0.8px;">,</span><span class="t f8" style="left:271.5px;top:103px;color:#ffffff;letter-spacing:-0.8px;">Forms</span><span class="t f8" style="left:38.3px;top:118px;color:#f4f4f4;letter-spacing:-0.8px;">9</span><span class="t f8" style="left:68.5px;top:118px;color:#ffffff;letter-spacing:-0.8px;">SpkToolbar</span><span class="t f8" style="left:138.5px;top:118px;color:#00d0d0;letter-spacing:-0.8px;">,</span><span class="t f8" style="left:152.5px;top:118px;color:#ffffff;letter-spacing:-0.8px;">spkt_Tab</span><span class="t f8" style="left:208.5px;top:118px;color:#00d0d0;letter-spacing:-0.8px;">,</span><span class="t f8" style="left:222.5px;top:118px;color:#ffffff;letter-spacing:-0.8px;">spkt_Pane</span><span class="t f8" style="left:285.5px;top:118px;color:#00d0d0;letter-spacing:-0.8px;">,</span><span class="t f8" style="left:31.3px;top:133px;color:#f4f4f4;letter-spacing:-0.8px;">10</span><div class="b" style="left:40.6px;top:158px;width:2px;height:2px;background:#e0e0e0;"></div><span class="t f9" style="left:54.5px;top:148px;color:#5fb3a8;letter-spacing:-0.8px;">type</span><div class="b" style="left:40.6px;top:173px;width:2px;height:2px;background:#e0e0e0;"></div><div class="b" style="left:40.6px;top:188px;width:2px;height:2px;background:#e0e0e0;"></div><span class="t f8" style="left:68.5px;top:178px;color:#e81010;letter-spacing:-0.8px;">{ TForm1 }</span><div class="b" style="left:40.6px;top:203px;width:2px;height:2px;background:#e0e0e0;"></div><span class="t f8" style="left:31.3px;top:208px;color:#f4f4f4;letter-spacing:-0.8px;">15</span><span class="t f8" style="left:68.5px;top:208px;color:#ffffff;letter-spacing:-0.8px;">TForm1</span><span class="t f8" style="left:117.5px;top:208px;color:#00d0d0;letter-spacing:-0.8px;">=</span><span class="t f9" style="left:131.5px;top:208px;color:#5fb3a8;letter-spacing:-0.8px;">class</span><span class="t f8" style="left:166.5px;top:208px;color:#00d0d0;letter-spacing:-0.8px;">(</span><span class="t f8" style="left:173.5px;top:208px;color:#ffffff;letter-spacing:-0.8px;">TForm</span><span class="t f8" style="left:208.5px;top:208px;color:#00d0d0;letter-spacing:-0.8px;">)</span><div class="b" style="left:40.6px;top:233px;width:2px;height:2px;background:#e0e0e0;"></div><span class="t f8" style="left:82.5px;top:223px;color:#ffffff;letter-spacing:-0.8px;">LargeImages</span><span class="t f8" style="left:159.5px;top:223px;color:#00d0d0;letter-spacing:-0.8px;">:</span><span class="t f8" style="left:173.5px;top:223px;color:#ffffff;letter-spacing:-0.8px;">TImageList</span><span class="t f8" style="left:243.5px;top:223px;color:#00d0d0;letter-spacing:-0.8px;">;</span><div class="b" style="left:40.6px;top:248px;width:2px;height:2px;background:#e0e0e0;"></div><span class="t f8" style="left:82.5px;top:238px;color:#ffffff;letter-spacing:-0.8px;">Panel1</span><span class="t f8" style="left:124.5px;top:238px;color:#00d0d0;letter-spacing:-0.8px;">:</span><span class="t f8" style="left:138.5px;top:238px;color:#ffffff;letter-spacing:-0.8px;">TPanel</span><span class="t f8" style="left:180.5px;top:238px;color:#00d0d0;letter-spacing:-0.8px;">;</span><div class="b" style="left:40.6px;top:263px;width:2px;height:2px;background:#e0e0e0;"></div><span class="t f8" style="left:82.5px;top:253px;color:#ffffff;letter-spacing:-0.8px;">Panel2</span><span class="t f8" style="left:124.5px;top:253px;color:#00d0d0;letter-spacing:-0.8px;">:</span><span class="t f8" style="left:138.5px;top:253px;color:#ffffff;letter-spacing:-0.8px;">TPanel</span><span class="t f8" style="left:180.5px;top:253px;color:#00d0d0;letter-spacing:-0.8px;">;</span><div class="b" style="left:40.6px;top:278px;width:2px;height:2px;background:#e0e0e0;"></div><span class="t f8" style="left:82.5px;top:268px;color:#ffffff;letter-spacing:-0.8px;">Panel3</span><span class="t f8" style="left:124.5px;top:268px;color:#00d0d0;letter-spacing:-0.8px;">:</span><span class="t f8" style="left:138.5px;top:268px;color:#ffffff;letter-spacing:-0.8px;">TPanel</span><span class="t f8" style="left:180.5px;top:268px;color:#00d0d0;letter-spacing:-0.8px;">;</span><span class="t f8" style="left:31.3px;top:283px;color:#f4f4f4;letter-spacing:-0.8px;">20</span><span class="t f8" style="left:82.5px;top:283px;color:#ffffff;letter-spacing:-0.8px;">Panel4</span><span class="t f8" style="left:124.5px;top:283px;color:#00d0d0;letter-spacing:-0.8px;">:</span><span class="t f8" style="left:138.5px;top:283px;color:#ffffff;letter-spacing:-0.8px;">TPanel</span><span class="t f8" style="left:180.5px;top:283px;color:#00d0d0;letter-spacing:-0.8px;">;</span><div class="b" style="left:40.6px;top:308px;width:2px;height:2px;background:#e0e0e0;"></div><span class="t f8" style="left:82.5px;top:298px;color:#ffffff;letter-spacing:-0.8px;">SmallImages</span><span class="t f8" style="left:159.5px;top:298px;color:#00d0d0;letter-spacing:-0.8px;">:</span><span class="t f8" style="left:173.5px;top:298px;color:#ffffff;letter-spacing:-0.8px;">TImageList</span><span class="t f8" style="left:243.5px;top:298px;color:#00d0d0;letter-spacing:-0.8px;">;</span><div class="b" style="left:40.6px;top:323px;width:2px;height:2px;background:#e0e0e0;"></div><span class="t f8" style="left:82.5px;top:313px;color:#ffffff;letter-spacing:-0.8px;">SpkLargeButton1</span><span class="t f8" style="left:187.5px;top:313px;color:#00d0d0;letter-spacing:-0.8px;">:</span><span class="t f8" style="left:201.5px;top:313px;color:#ffffff;letter-spacing:-0.8px;">TSpkLargeButton</span><span class="t f8" style="left:306.5px;top:313px;color:#00d0d0;letter-spacing:-0.8px;">;</span><div class="b" style="left:40.6px;top:338px;width:2px;height:2px;background:#e0e0e0;"></div><span class="t f8" style="left:82.5px;top:328px;color:#ffffff;letter-spacing:-0.8px;">SpkLargeButton10</span><span class="t f8" style="left:194.5px;top:328px;color:#00d0d0;letter-spacing:-0.8px;">:</span><span class="t f8" style="left:208.5px;top:328px;color:#ffffff;letter-spacing:-0.8px;">TSpkLargeButton</span><span class="t f8" style="left:313.5px;top:328px;color:#00d0d0;letter-spacing:-0.8px;">;</span><div class="b" style="left:40.6px;top:353px;width:2px;height:2px;background:#e0e0e0;"></div><span class="t f8" style="left:82.5px;top:343px;color:#ffffff;letter-spacing:-0.8px;">SpkLargeButton11</span><span class="t f8" style="left:194.5px;top:343px;color:#00d0d0;letter-spacing:-0.8px;">:</span><span class="t f8" style="left:208.5px;top:343px;color:#ffffff;letter-spacing:-0.8px;">TSpkLargeButton</span><span class="t f8" style="left:313.5px;top:343px;color:#00d0d0;letter-spacing:-0.8px;">;</span><span class="t f8" style="left:31.3px;top:358px;color:#f4f4f4;letter-spacing:-0.8px;">25</span><span class="t f8" style="left:82.5px;top:358px;color:#ffffff;letter-spacing:-0.8px;">SpkLargeButton12</span><span class="t f8" style="left:194.5px;top:358px;color:#00d0d0;letter-spacing:-0.8px;">:</span><span class="t f8" style="left:208.5px;top:358px;color:#ffffff;letter-spacing:-0.8px;">TSpkLargeButton</span><span class="t f8" style="left:313.5px;top:358px;color:#00d0d0;letter-spacing:-0.8px;">;</span><div class="b" style="left:40.6px;top:383px;width:2px;height:2px;background:#e0e0e0;"></div><span class="t f8" style="left:82.5px;top:373px;color:#ffffff;letter-spacing:-0.8px;">SpkLargeButton13</span><span class="t f8" style="left:194.5px;top:373px;color:#00d0d0;letter-spacing:-0.8px;">:</span><span class="t f8" style="left:208.5px;top:373px;color:#ffffff;letter-spacing:-0.8px;">TSpkLargeButton</span><span class="t f8" style="left:313.5px;top:373px;color:#00d0d0;letter-spacing:-0.8px;">;</span><div class="b" style="left:40.6px;top:398px;width:2px;height:2px;background:#e0e0e0;"></div><span class="t f8" style="left:82.5px;top:388px;color:#ffffff;letter-spacing:-0.8px;">SpkLargeButton14</span><span class="t f8" style="left:194.5px;top:388px;color:#00d0d0;letter-spacing:-0.8px;">:</span><span class="t f8" style="left:208.5px;top:388px;color:#ffffff;letter-spacing:-0.8px;">TSpkLargeButton</span><span class="t f8" style="left:313.5px;top:388px;color:#00d0d0;letter-spacing:-0.8px;">;</span><div class="b" style="left:40.6px;top:413px;width:2px;height:2px;background:#e0e0e0;"></div><span class="t f8" style="left:82.5px;top:403px;color:#ffffff;letter-spacing:-0.8px;">SpkLargeButton15</span><span class="t f8" style="left:194.5px;top:403px;color:#00d0d0;letter-spacing:-0.8px;">:</span><span class="t f8" style="left:208.5px;top:403px;color:#ffffff;letter-spacing:-0.8px;">TSpkLargeButton</span><span class="t f8" style="left:313.5px;top:403px;color:#00d0d0;letter-spacing:-0.8px;">;</span><div class="b" style="left:40.6px;top:428px;width:2px;height:2px;background:#e0e0e0;"></div><span class="t f8" style="left:82.5px;top:418px;color:#ffffff;letter-spacing:-0.8px;">SpkLargeButton2</span><span class="t f8" style="left:187.5px;top:418px;color:#00d0d0;letter-spacing:-0.8px;">:</span><span class="t f8" style="left:201.5px;top:418px;color:#ffffff;letter-spacing:-0.8px;">TSpkLargeButton</span><span class="t f8" style="left:306.5px;top:418px;color:#00d0d0;letter-spacing:-0.8px;">;</span><span class="t f8" style="left:31.3px;top:433px;color:#f4f4f4;letter-spacing:-0.8px;">30</span><span class="t f8" style="left:82.5px;top:433px;color:#ffffff;letter-spacing:-0.8px;">SpkLargeButton3</span><span class="t f8" style="left:187.5px;top:433px;color:#00d0d0;letter-spacing:-0.8px;">:</span><span class="t f8" style="left:201.5px;top:433px;color:#ffffff;letter-spacing:-0.8px;">TSpkLargeButton</span><span class="t f8" style="left:306.5px;top:433px;color:#00d0d0;letter-spacing:-0.8px;">;</span><div class="b" style="left:40.6px;top:458px;width:2px;height:2px;background:#e0e0e0;"></div><span class="t f8" style="left:82.5px;top:448px;color:#ffffff;letter-spacing:-0.8px;">SpkLargeButton4</span><span class="t f8" style="left:187.5px;top:448px;color:#00d0d0;letter-spacing:-0.8px;">:</span><span class="t f8" style="left:201.5px;top:448px;color:#ffffff;letter-spacing:-0.8px;">TSpkLargeButton</span><span class="t f8" style="left:306.5px;top:448px;color:#00d0d0;letter-spacing:-0.8px;">;</span><div class="b" style="left:40.6px;top:473px;width:2px;height:2px;background:#e0e0e0;"></div><span class="t f8" style="left:82.5px;top:463px;color:#ffffff;letter-spacing:-0.8px;">SpkLargeButton5</span><span class="t f8" style="left:187.5px;top:463px;color:#00d0d0;letter-spacing:-0.8px;">:</span><span class="t f8" style="left:201.5px;top:463px;color:#ffffff;letter-spacing:-0.8px;">TSpkLargeButton</span><span class="t f8" style="left:306.5px;top:463px;color:#00d0d0;letter-spacing:-0.8px;">;</span><div class="b" style="left:40.6px;top:488px;width:2px;height:2px;background:#e0e0e0;"></div><span class="t f8" style="left:82.5px;top:478px;color:#ffffff;letter-spacing:-0.8px;">SpkLargeButton6</span><span class="t f8" style="left:187.5px;top:478px;color:#00d0d0;letter-spacing:-0.8px;">:</span><span class="t f8" style="left:201.5px;top:478px;color:#ffffff;letter-spacing:-0.8px;">TSpkLargeButton</span><span class="t f8" style="left:306.5px;top:478px;color:#00d0d0;letter-spacing:-0.8px;">;</span><div class="b" style="left:40.6px;top:503px;width:2px;height:2px;background:#e0e0e0;"></div><span class="t f8" style="left:82.5px;top:493px;color:#ffffff;letter-spacing:-0.8px;">SpkLargeButton7</span><span class="t f8" style="left:187.5px;top:493px;color:#00d0d0;letter-spacing:-0.8px;">:</span><span class="t f8" style="left:201.5px;top:493px;color:#ffffff;letter-spacing:-0.8px;">TSpkLargeButton</span><span class="t f8" style="left:306.5px;top:493px;color:#00d0d0;letter-spacing:-0.8px;">;</span><span class="t f8" style="left:31.3px;top:508px;color:#f4f4f4;letter-spacing:-0.8px;">35</span><span class="t f8" style="left:82.5px;top:508px;color:#ffffff;letter-spacing:-0.8px;">SpkLargeButton8</span><span class="t f8" style="left:187.5px;top:508px;color:#00d0d0;letter-spacing:-0.8px;">:</span><span class="t f8" style="left:201.5px;top:508px;color:#ffffff;letter-spacing:-0.8px;">TSpkLargeButton</span><span class="t f8" style="left:306.5px;top:508px;color:#00d0d0;letter-spacing:-0.8px;">;</span><div class="b" style="left:40.6px;top:533px;width:2px;height:2px;background:#e0e0e0;"></div><span class="t f8" style="left:82.5px;top:523px;color:#ffffff;letter-spacing:-0.8px;">SpkLargeButton9</span><span class="t f8" style="left:187.5px;top:523px;color:#00d0d0;letter-spacing:-0.8px;">:</span><span class="t f8" style="left:201.5px;top:523px;color:#ffffff;letter-spacing:-0.8px;">TSpkLargeButton</span><span class="t f8" style="left:306.5px;top:523px;color:#00d0d0;letter-spacing:-0.8px;">;</span><div class="b" style="left:40.6px;top:548px;width:2px;height:2px;background:#e0e0e0;"></div><span class="t f8" style="left:82.5px;top:538px;color:#ffffff;letter-spacing:-0.8px;">SpkPane1</span><span class="t f8" style="left:138.5px;top:538px;color:#00d0d0;letter-spacing:-0.8px;">:</span><span class="t f8" style="left:152.5px;top:538px;color:#ffffff;letter-spacing:-0.8px;">TSpkPane</span><span class="t f8" style="left:208.5px;top:538px;color:#00d0d0;letter-spacing:-0.8px;">;</span><div class="b" style="left:40.6px;top:563px;width:2px;height:2px;background:#e0e0e0;"></div><span class="t f8" style="left:82.5px;top:553px;color:#ffffff;letter-spacing:-0.8px;">SpkPane10</span><span class="t f8" style="left:145.5px;top:553px;color:#00d0d0;letter-spacing:-0.8px;">:</span><span class="t f8" style="left:159.5px;top:553px;color:#ffffff;letter-spacing:-0.8px;">TSpkPane</span><span class="t f8" style="left:215.5px;top:553px;color:#00d0d0;letter-spacing:-0.8px;">;</span></div><div class="b" style="left:1174px;top:257px;width:10.5px;height:525px;background:#d0d0cf;"></div><div class="b" style="left:1174px;top:782px;width:10.5px;height:32px;background:#e9e9e8;"></div><div class="b" style="left:1186px;top:257px;width:12.5px;height:557px;background:#bdbdbc;"></div><div class="b" style="left:1189.3px;top:260.5px;width:6px;height:188px;background:#7c7e7f;border-radius:3px"></div><div class="b" style="left:1186px;top:814px;width:12.5px;height:13px;background:#ecebea;"></div><div class="b" style="left:316px;top:814px;width:868.5px;height:13px;background:#c4c4c3;"></div><div class="b" style="left:319px;top:817.5px;width:90px;height:6px;background:#7c7e7f;border-radius:3px"></div><div class="b" style="left:372px;top:829px;width:72px;height:29px;border:1px solid #b6b6b5;border-top:none;border-radius:0 0 4px 4px;background:linear-gradient(180deg,#eaeae9,#f1f1f0)"></div><span class="t f7" style="left:378.3px;top:834px;color:#2e3436;letter-spacing:-0.24px;">Designer</span><div class="b" style="left:310px;top:828px;width:63px;height:31px;background:#fcfcfc;border:1px solid #b0b0af;border-top:none;border-radius:0 0 4px 4px"></div><span class="t f7" style="left:319.5px;top:835px;color:#2e3436;letter-spacing:-0.49px;">Source</span><div class="b" style="left:305px;top:861px;width:904px;height:1px;background:#b4b4b3;"></div><div class="b" style="left:305px;top:862px;width:900px;height:22px;background:#e8e8e7;"></div><span class="t f7" style="left:330px;top:864px;color:#4a4e50;letter-spacing:-0.11px;">9:  13</span><span class="t f7" style="left:556px;top:864px;color:#4a4e50;letter-spacing:-0.65px;">INS</span><span class="t f7" style="left:641.62px;top:864px;color:#4a4e50;letter-spacing:-0.45px;">/usr/local/codetyphon/CodeOcean/pl_SpkToolBar/samples/styles/stylesunit1.pas</span><div class="b" style="left:283px;top:888px;width:21.3px;height:74px;background:#fefeb8;border-left:1px solid #d8d8c0;overflow:hidden"><span style="position:absolute;left:8.5px;top:43px;transform:translate(-50%,-50%) rotate(-90deg);white-space:pre;font-size:14.67px;letter-spacing:-0.25px;color:#3a3a30;line-height:20px">Messages</span></div><svg class="b" style="left:289px;top:890px;" width="10" height="10" viewBox="0 0 10 10"><path d="M1.2 1.2 L8.8 8.8 M8.8 1.2 L1.2 8.8" stroke="#111" stroke-width="2.3" fill="none"/></svg><div class="b" style="left:305px;top:888px;width:891.5px;height:74px;background:#fff;"></div><div class="b" style="left:305px;top:888px;width:892px;height:22px;background:#5cff5c;"></div><div class="b" style="left:305px;top:910px;width:892px;height:22px;background:#5cff5c;"></div><div class="b" style="left:305px;top:909.5px;width:892px;height:1px;background:#6cf08c;"></div><span class="t f7" style="left:306.5px;top:890px;color:#101010;letter-spacing:-0.2px;">Compile package pl_spktoolbar 6.1.1: Success</span><span class="t f7" style="left:306.5px;top:912px;color:#101010;letter-spacing:-0.02px;">Compile Project, Target: /usr/local/codetyphon/CodeOcean/pl_SpkToolBar/samples/xbin/stylesproject1: Success</span><div class="b" style="left:1196.5px;top:888px;width:12.5px;height:74px;background:#c6c6c5;"></div><div class="b" style="left:1200.2px;top:891.5px;width:6px;height:67px;background:#7c7e7f;border-radius:3px"></div>
<!-- p_dlg -->
<div class="b" style="left:587px;top:195px;width:506px;height:696px;background:#a0a0a4;border-radius:8px 8px 0 0;box-shadow:0 2px 9px 1px rgba(0,0,0,.38),0 0 0 1px rgba(0,0,0,.22)"></div><div class="b" style="left:587px;top:195px;width:506px;height:36px;border-radius:8px 8px 0 0;background:linear-gradient(180deg,#fafafa,#f5f5f4 50%,#f0f0ef);border-bottom:1px solid #c8c8c8;box-shadow:inset 0 1px 0 #fff"></div><span class="t f0" style="left:779px;top:204px;color:#2e3436;letter-spacing:-0.25px;">spkToolbar Styles</span><svg class="b" style="left:1070.5px;top:207.5px;" width="9" height="9" viewBox="0 0 9 9"><path d="M1 1 L8 8 M8 1 L1 8" stroke="#2e3436" stroke-width="2" fill="none"/></svg><div class="b" style="left:587px;top:254px;width:506px;height:89px;background:linear-gradient(180deg,#e1e9f6 0,#dfe8f6 22px,#cbdbf0 23px,#cfdef2 55px,#dae6f6 88px);border:1px solid #9cbfe8;"></div><div class="b" style="left:593px;top:233px;width:96px;height:22px;background:linear-gradient(180deg,#dde7f5,#e3ebf8);border:1px solid #b4c8e4;border-bottom:none;border-radius:3px 3px 0 0"></div><span class="t f10" style="left:599px;top:236px;color:#1d4490;letter-spacing:-0.01px;">Office2007 Blue</span><div class="b" style="left:591px;top:257px;width:244px;height:84px;background:linear-gradient(180deg,#e3eaf7 0,#dfe8f6 19px,#cbdaef 20px,#c8d8ee 67px,#c2d9f1 68px,#c2d9f1 100%);border:1px solid #a9c4e6;border-radius:3px;box-shadow:inset 0 0 0 1px rgba(255,255,255,.45)"></div><div class="b" style="left:839px;top:257px;width:124px;height:84px;background:linear-gradient(180deg,#e3eaf7 0,#dfe8f6 19px,#cbdaef 20px,#c8d8ee 67px,#c2d9f1 68px,#c2d9f1 100%);border:1px solid #a9c4e6;border-radius:3px;box-shadow:inset 0 0 0 1px rgba(255,255,255,.45)"></div><svg class="b" style="left:599px;top:263px;" width="24" height="28" viewBox="0 0 24 28"><defs><linearGradient id="gn0" x1="0" y1="0" x2="0" y2="1"><stop offset="0" stop-color="#a9cfe2"/><stop offset=".72" stop-color="#e6f2f7"/><stop offset=".73" stop-color="#a5cadf"/><stop offset="1" stop-color="#b5d5e6"/></linearGradient></defs><path d="M.8 .8 H16 L23.2 8 V27.4 H.8 Z" fill="#fff" stroke="#2a7cba" stroke-width="1.5" stroke-linejoin="round"/><path d="M2.6 2.6 H15.2 V8.8 H21.4 V25.6 H2.6 Z" fill="url(#gn0)"/><path d="M16 1 V8 H23" fill="none" stroke="#2a7cba" stroke-width="1.3"/></svg><span class="t f10" style="left:599.6px;top:297px;color:#7a93c6;letter-spacing:-0.41px;">New</span><span class="t f10" style="left:607.6px;top:305px;color:#7a93c6;">u</span><svg class="b" style="left:648px;top:266px;" width="30" height="22" viewBox="0 0 30 22"><defs><linearGradient id="gf0" x1="0" y1="0" x2="0" y2="1"><stop offset="0" stop-color="#fbe08a"/><stop offset="1" stop-color="#f3c65a"/></linearGradient></defs><path d="M1 21 V1.5 Q1 .8 1.8 .8 H9 L11 3 H24.5 Q25.2 3 25.2 3.8 V8" fill="#f5cf6a" stroke="#d9a23c" stroke-width="1.2"/><path d="M1 21.2 L4.6 9.4 Q4.9 8.6 5.8 8.6 H12 L14 7 H28.8 Q29.8 7 29.5 8 L26 20.4 Q25.7 21.2 24.8 21.2 Z" fill="url(#gf0)" stroke="#dba53e" stroke-width="1.1" stroke-linejoin="round"/></svg><span class="t f10" style="left:635.7px;top:297px;color:#7a93c6;letter-spacing:-0.25px;">Open file...</span><span class="t f10" style="left:660px;top:305px;color:#7a93c6;">u</span><svg class="b" style="left:702px;top:270px;" width="16" height="15" viewBox="0 0 16 15"><rect x=".7" y=".7" width="14.6" height="13.6" rx="1.5" fill="#4aa8e8" stroke="#1d6fb8" stroke-width="1.2"/><rect x="3" y="1.6" width="10" height="6" fill="#f4f8fc"/><path d="M4 3.4 H12 M4 5.4 H12" stroke="#8a9098" stroke-width="1" stroke-dasharray="2 .8"/><rect x="4.4" y="10" width="7.2" height="4.6" fill="#f0f0f0"/><rect x="6.3" y="11" width="1.6" height="3" fill="#444"/></svg><span class="t f10" style="left:720.5px;top:271px;color:#7a93c6;letter-spacing:-0.46px;">Save</span><span class="t f10" style="left:752px;top:271px;color:#7a93c6;">u</span><svg class="b" style="left:702px;top:299px;" width="16" height="15" viewBox="0 0 16 15"><rect x=".7" y=".7" width="14.6" height="13.6" rx="1.5" fill="#4aa8e8" stroke="#1d6fb8" stroke-width="1.2"/><rect x="3" y="1.6" width="10" height="6" fill="#f4f8fc"/><path d="M4 3.4 H12 M4 5.4 H12" stroke="#8a9098" stroke-width="1" stroke-dasharray="2 .8"/><rect x="3.5" y="8.6" width="12" height="6" fill="#fff" stroke="#1d6fb8" stroke-width="1.1"/><path d="M7.5 10.3 H10 M8.7 10.3 V13 M7.5 13 H10" stroke="#333" stroke-width=".9"/></svg><span class="t f10" style="left:720.5px;top:300px;color:#7a93c6;letter-spacing:-0.34px;">Save as...</span><svg class="b" style="left:789.6px;top:261.5px;" width="31" height="31" viewBox="0 0 31 31"><defs><linearGradient id="gd0" x1="0" y1="0" x2="0" y2="1"><stop offset="0" stop-color="#3c3c40"/><stop offset="1" stop-color="#6c6c70"/></linearGradient><linearGradient id="gw0" x1="0" y1="0" x2="1" y2="0"><stop offset="0" stop-color="#e0b070"/><stop offset="1" stop-color="#b8782c"/></linearGradient></defs><path d="M0 29 H23" stroke="#5a5a5e" stroke-width="1.6"/><rect x="7.6" y="4" width="15" height="25" fill="url(#gd0)" stroke="#c88a30" stroke-width="1.2"/><path d="M22 4 L30.2 .6 V30.8 L22 29 Z" fill="url(#gw0)" stroke="#b8782c" stroke-width=".8"/><rect x="26.4" y="14" width="1.6" height="3.6" fill="#f4c020"/><path d="M.8 13 H5.6 V9.6 L11 16 L5.6 22.4 V19 H.8 Z" fill="#8cd820" stroke="#5a9a10" stroke-width="1.1" stroke-linejoin="round"/></svg><span class="t f10" style="left:795.5px;top:297px;color:#7a93c6;letter-spacing:-0.2px;">Exit</span><span class="t f10" style="left:782.5px;top:310px;color:#7a93c6;letter-spacing:0.19px;">program</span><span class="t f10" style="left:671.3px;top:326px;color:#1b3f8c;letter-spacing:0.2px;">File commands</span><svg class="b" style="left:848px;top:262.3px;" width="13" height="15" viewBox="0 0 13 15"><g transform="rotate(-18 6.5 8)"><path d="M3.5 .5 Q3 5 7.5 9.5 M8.2 .5 Q8 5 5 9.5" stroke="#b8bcc4" stroke-width="1.5" fill="none"/><ellipse cx="3.6" cy="12" rx="1.7" ry="2.4" fill="none" stroke="#3a82cc" stroke-width="1.6" transform="rotate(15 3.6 12)"/><ellipse cx="10.3" cy="11" rx="2.4" ry="1.7" fill="none" stroke="#3a82cc" stroke-width="1.6" transform="rotate(25 10.3 11)"/><path d="M5.5 7.5 L4 10 M6.5 8 L8.5 10" stroke="#3a82cc" stroke-width="1.5"/></g></svg><span class="t f10" style="left:865.6px;top:263px;color:#7a93c6;letter-spacing:-0.1px;">Cut</span><svg class="b" style="left:847px;top:284px;" width="16" height="16" viewBox="0 0 16 16"><path d="M1 .8 H6.5 L9 3.3 V11 H1 Z" fill="#f4f4f4" stroke="#a9adb4" stroke-width="1"/><path d="M7 5.2 H12.5 L15 7.7 V15 H7 Z" fill="#fafafa" stroke="#a9adb4" stroke-width="1"/><path d="M6.5 .8 V3.3 H9 M12.5 5.2 V7.7 H15" fill="none" stroke="#a9adb4" stroke-width=".8"/><path d="M2.5 5 H6 M2.5 7 H5.5 M8.5 9.5 H12.5 M8.5 11.5 H13" stroke="#cfd2d6" stroke-width=".8"/></svg><span class="t f10" style="left:865.6px;top:285px;color:#7a93c6;letter-spacing:-0.25px;">Copy</span><svg class="b" style="left:847px;top:305.6px;" width="16" height="16" viewBox="0 0 16 16"><rect x=".8" y="1.6" width="11" height="12.6" rx="1" fill="#c89050" stroke="#a06a2c" stroke-width="1"/><rect x="4" y=".4" width="4.6" height="2.6" rx=".8" fill="#b0b4bc" stroke="#888" stroke-width=".6"/><rect x="6.6" y="5.6" width="8.6" height="9.6" fill="#fcfcfc" stroke="#c4c4c4" stroke-width=".9"/><path d="M8.4 8 H13.4 M8.4 10.2 H13.4 M8.4 12.4 H13.4" stroke="#555" stroke-width="1" stroke-dasharray="1.6 .8"/></svg><span class="t f10" style="left:865.6px;top:307px;color:#7a93c6;letter-spacing:0.02px;">Paste</span><div class="b" style="left:904px;top:267px;width:56px;height:22px;background:#c5d7ef;border:1px solid #a3bade;border-radius:3px"></div><span class="t f10" style="left:908.3px;top:271px;color:#7a93c6;letter-spacing:-0.14px;">Select all</span><div class="b" style="left:904px;top:296px;width:54px;height:22px;background:#c5d7ef;border:1px solid #a3bade;border-radius:3px"></div><span class="t f10" style="left:908.3px;top:300px;color:#7a93c6;letter-spacing:-0.15px;">Unselect</span><span class="t f10" style="left:858.3px;top:326px;color:#1b3f8c;letter-spacing:0.22px;">Edit commands</span><div class="b" style="left:587px;top:391px;width:506px;height:89px;background:linear-gradient(180deg,#f5f5f7 0,#f3f3f6 22px,#e3e6ef 23px,#e4e7f0 60px,#eceef5 88px);border:1px solid #b4b6bc;"></div><div class="b" style="left:593px;top:370px;width:103px;height:22px;background:linear-gradient(180deg,#f1f1f3,#ececee);border:1px solid #c0c0c4;border-bottom:none;border-radius:3px 3px 0 0"></div><span class="t f10" style="left:599px;top:373px;color:#4f566a;letter-spacing:-0.07px;">Office2007 Silver</span><div class="b" style="left:591px;top:394px;width:244px;height:84px;background:linear-gradient(180deg,#f7f7f7 0,#f5f5f5 19px,#eaeaea 20px,#e8e8e8 67px,#dfdfdf 68px,#dfdfdf 100%);border:1px solid #b2b2b6;border-radius:3px;box-shadow:inset 0 0 0 1px rgba(255,255,255,.45)"></div><div class="b" style="left:839px;top:394px;width:124px;height:84px;background:linear-gradient(180deg,#f7f7f7 0,#f5f5f5 19px,#eaeaea 20px,#e8e8e8 67px,#dfdfdf 68px,#dfdfdf 100%);border:1px solid #b2b2b6;border-radius:3px;box-shadow:inset 0 0 0 1px rgba(255,255,255,.45)"></div><svg class="b" style="left:599px;top:400px;" width="24" height="28" viewBox="0 0 24 28"><defs><linearGradient id="gn1" x1="0" y1="0" x2="0" y2="1"><stop offset="0" stop-color="#a9cfe2"/><stop offset=".72" stop-color="#e6f2f7"/><stop offset=".73" stop-color="#a5cadf"/><stop offset="1" stop-color="#b5d5e6"/></linearGradient></defs><path d="M.8 .8 H16 L23.2 8 V27.4 H.8 Z" fill="#fff" stroke="#2a7cba" stroke-width="1.5" stroke-linejoin="round"/><path d="M2.6 2.6 H15.2 V8.8 H21.4 V25.6 H2.6 Z" fill="url(#gn1)"/><path d="M16 1 V8 H23" fill="none" stroke="#2a7cba" stroke-width="1.3"/></svg><span class="t f10" style="left:599.6px;top:434px;color:#8b8b8b;letter-spacing:-0.41px;">New</span><span class="t f10" style="left:607.6px;top:442px;color:#8b8b8b;">u</span><svg class="b" style="left:648px;top:403px;" width="30" height="22" viewBox="0 0 30 22"><defs><linearGradient id="gf1" x1="0" y1="0" x2="0" y2="1"><stop offset="0" stop-color="#fbe08a"/><stop offset="1" stop-color="#f3c65a"/></linearGradient></defs><path d="M1 21 V1.5 Q1 .8 1.8 .8 H9 L11 3 H24.5 Q25.2 3 25.2 3.8 V8" fill="#f5cf6a" stroke="#d9a23c" stroke-width="1.2"/><path d="M1 21.2 L4.6 9.4 Q4.9 8.6 5.8 8.6 H12 L14 7 H28.8 Q29.8 7 29.5 8 L26 20.4 Q25.7 21.2 24.8 21.2 Z" fill="url(#gf1)" stroke="#dba53e" stroke-width="1.1" stroke-linejoin="round"/></svg><span class="t f10" style="left:635.7px;top:434px;color:#8b8b8b;letter-spacing:-0.25px;">Open file...</span><span class="t f10" style="left:660px;top:442px;color:#8b8b8b;">u</span><svg class="b" style="left:702px;top:407px;" width="16" height="15" viewBox="0 0 16 15"><rect x=".7" y=".7" width="14.6" height="13.6" rx="1.5" fill="#4aa8e8" stroke="#1d6fb8" stroke-width="1.2"/><rect x="3" y="1.6" width="10" height="6" fill="#f4f8fc"/><path d="M4 3.4 H12 M4 5.4 H12" stroke="#8a9098" stroke-width="1" stroke-dasharray="2 .8"/><rect x="4.4" y="10" width="7.2" height="4.6" fill="#f0f0f0"/><rect x="6.3" y="11" width="1.6" height="3" fill="#444"/></svg><span class="t f10" style="left:720.5px;top:408px;color:#8b8b8b;letter-spacing:-0.46px;">Save</span><span class="t f10" style="left:752px;top:408px;color:#8b8b8b;">u</span><svg class="b" style="left:702px;top:436px;" width="16" height="15" viewBox="0 0 16 15"><rect x=".7" y=".7" width="14.6" height="13.6" rx="1.5" fill="#4aa8e8" stroke="#1d6fb8" stroke-width="1.2"/><rect x="3" y="1.6" width="10" height="6" fill="#f4f8fc"/><path d="M4 3.4 H12 M4 5.4 H12" stroke="#8a9098" stroke-width="1" stroke-dasharray="2 .8"/><rect x="3.5" y="8.6" width="12" height="6" fill="#fff" stroke="#1d6fb8" stroke-width="1.1"/><path d="M7.5 10.3 H10 M8.7 10.3 V13 M7.5 13 H10" stroke="#333" stroke-width=".9"/></svg><span class="t f10" style="left:720.5px;top:437px;color:#8b8b8b;letter-spacing:-0.34px;">Save as...</span><svg class="b" style="left:789.6px;top:398.5px;" width="31" height="31" viewBox="0 0 31 31"><defs><linearGradient id="gd1" x1="0" y1="0" x2="0" y2="1"><stop offset="0" stop-color="#3c3c40"/><stop offset="1" stop-color="#6c6c70"/></linearGradient><linearGradient id="gw1" x1="0" y1="0" x2="1" y2="0"><stop offset="0" stop-color="#e0b070"/><stop offset="1" stop-color="#b8782c"/></linearGradient></defs><path d="M0 29 H23" stroke="#5a5a5e" stroke-width="1.6"/><rect x="7.6" y="4" width="15" height="25" fill="url(#gd1)" stroke="#c88a30" stroke-width="1.2"/><path d="M22 4 L30.2 .6 V30.8 L22 29 Z" fill="url(#gw1)" stroke="#b8782c" stroke-width=".8"/><rect x="26.4" y="14" width="1.6" height="3.6" fill="#f4c020"/><path d="M.8 13 H5.6 V9.6 L11 16 L5.6 22.4 V19 H.8 Z" fill="#8cd820" stroke="#5a9a10" stroke-width="1.1" stroke-linejoin="round"/></svg><span class="t f10" style="left:795.5px;top:434px;color:#8b8b8b;letter-spacing:-0.2px;">Exit</span><span class="t f10" style="left:782.5px;top:447px;color:#8b8b8b;letter-spacing:0.19px;">program</span><span class="t f10" style="left:671.3px;top:463px;color:#3a3a3a;letter-spacing:0.2px;">File commands</span><svg class="b" style="left:848px;top:399.3px;" width="13" height="15" viewBox="0 0 13 15"><g transform="rotate(-18 6.5 8)"><path d="M3.5 .5 Q3 5 7.5 9.5 M8.2 .5 Q8 5 5 9.5" stroke="#b8bcc4" stroke-width="1.5" fill="none"/><ellipse cx="3.6" cy="12" rx="1.7" ry="2.4" fill="none" stroke="#3a82cc" stroke-width="1.6" transform="rotate(15 3.6 12)"/><ellipse cx="10.3" cy="11" rx="2.4" ry="1.7" fill="none" stroke="#3a82cc" stroke-width="1.6" transform="rotate(25 10.3 11)"/><path d="M5.5 7.5 L4 10 M6.5 8 L8.5 10" stroke="#3a82cc" stroke-width="1.5"/></g></svg><span class="t f10" style="left:865.6px;top:400px;color:#8b8b8b;letter-spacing:-0.1px;">Cut</span><svg class="b" style="left:847px;top:421px;" width="16" height="16" viewBox="0 0 16 16"><path d="M1 .8 H6.5 L9 3.3 V11 H1 Z" fill="#f4f4f4" stroke="#a9adb4" stroke-width="1"/><path d="M7 5.2 H12.5 L15 7.7 V15 H7 Z" fill="#fafafa" stroke="#a9adb4" stroke-width="1"/><path d="M6.5 .8 V3.3 H9 M12.5 5.2 V7.7 H15" fill="none" stroke="#a9adb4" stroke-width=".8"/><path d="M2.5 5 H6 M2.5 7 H5.5 M8.5 9.5 H12.5 M8.5 11.5 H13" stroke="#cfd2d6" stroke-width=".8"/></svg><span class="t f10" style="left:865.6px;top:422px;color:#8b8b8b;letter-spacing:-0.25px;">Copy</span><svg class="b" style="left:847px;top:442.6px;" width="16" height="16" viewBox="0 0 16 16"><rect x=".8" y="1.6" width="11" height="12.6" rx="1" fill="#c89050" stroke="#a06a2c" stroke-width="1"/><rect x="4" y=".4" width="4.6" height="2.6" rx=".8" fill="#b0b4bc" stroke="#888" stroke-width=".6"/><rect x="6.6" y="5.6" width="8.6" height="9.6" fill="#fcfcfc" stroke="#c4c4c4" stroke-width=".9"/><path d="M8.4 8 H13.4 M8.4 10.2 H13.4 M8.4 12.4 H13.4" stroke="#555" stroke-width="1" stroke-dasharray="1.6 .8"/></svg><span class="t f10" style="left:865.6px;top:444px;color:#8b8b8b;letter-spacing:0.02px;">Paste</span><div class="b" style="left:904px;top:404px;width:56px;height:22px;background:#ececec;border:1px solid #b8b8b8;border-radius:3px"></div><span class="t f10" style="left:908.3px;top:408px;color:#8b8b8b;letter-spacing:-0.14px;">Select all</span><div class="b" style="left:904px;top:433px;width:54px;height:22px;background:#ececec;border:1px solid #b8b8b8;border-radius:3px"></div><span class="t f10" style="left:908.3px;top:437px;color:#8b8b8b;letter-spacing:-0.15px;">Unselect</span><span class="t f10" style="left:858.3px;top:463px;color:#3a3a3a;letter-spacing:0.22px;">Edit commands</span><div class="b" style="left:587px;top:528px;width:506px;height:89px;background:linear-gradient(180deg,#f5f5f7 0,#f3f3f6 22px,#e3e6ef 23px,#e4e7f0 60px,#eceef5 88px);border:1px solid #b4b6bc;"></div><div class="b" style="left:593px;top:507px;width:159px;height:22px;background:linear-gradient(180deg,#f1f1f3,#ececee);border:1px solid #c0c0c4;border-bottom:none;border-radius:3px 3px 0 0"></div><span class="t f10" style="left:599px;top:510px;color:#4c5284;letter-spacing:0.12px;">Office2007 Silver/turquoise</span><div class="b" style="left:591px;top:531px;width:244px;height:84px;background:linear-gradient(180deg,#f7f7f7 0,#f5f5f5 19px,#eaeaea 20px,#e8e8e8 67px,#dfdfdf 68px,#dfdfdf 100%);border:1px solid #b2b2b6;border-radius:3px;box-shadow:inset 0 0 0 1px rgba(255,255,255,.45)"></div><div class="b" style="left:839px;top:531px;width:124px;height:84px;background:linear-gradient(180deg,#f7f7f7 0,#f5f5f5 19px,#eaeaea 20px,#e8e8e8 67px,#dfdfdf 68px,#dfdfdf 100%);border:1px solid #b2b2b6;border-radius:3px;box-shadow:inset 0 0 0 1px rgba(255,255,255,.45)"></div><svg class="b" style="left:599px;top:537px;" width="24" height="28" viewBox="0 0 24 28"><defs><linearGradient id="gn2" x1="0" y1="0" x2="0" y2="1"><stop offset="0" stop-color="#a9cfe2"/><stop offset=".72" stop-color="#e6f2f7"/><stop offset=".73" stop-color="#a5cadf"/><stop offset="1" stop-color="#b5d5e6"/></linearGradient></defs><path d="M.8 .8 H16 L23.2 8 V27.4 H.8 Z" fill="#fff" stroke="#2a7cba" stroke-width="1.5" stroke-linejoin="round"/><path d="M2.6 2.6 H15.2 V8.8 H21.4 V25.6 H2.6 Z" fill="url(#gn2)"/><path d="M16 1 V8 H23" fill="none" stroke="#2a7cba" stroke-width="1.3"/></svg><span class="t f10" style="left:599.6px;top:571px;color:#8b8b8b;letter-spacing:-0.41px;">New</span><span class="t f10" style="left:607.6px;top:579px;color:#8b8b8b;">u</span><svg class="b" style="left:648px;top:540px;" width="30" height="22" viewBox="0 0 30 22"><defs><linearGradient id="gf2" x1="0" y1="0" x2="0" y2="1"><stop offset="0" stop-color="#fbe08a"/><stop offset="1" stop-color="#f3c65a"/></linearGradient></defs><path d="M1 21 V1.5 Q1 .8 1.8 .8 H9 L11 3 H24.5 Q25.2 3 25.2 3.8 V8" fill="#f5cf6a" stroke="#d9a23c" stroke-width="1.2"/><path d="M1 21.2 L4.6 9.4 Q4.9 8.6 5.8 8.6 H12 L14 7 H28.8 Q29.8 7 29.5 8 L26 20.4 Q25.7 21.2 24.8 21.2 Z" fill="url(#gf2)" stroke="#dba53e" stroke-width="1.1" stroke-linejoin="round"/></svg><span class="t f10" style="left:635.7px;top:571px;color:#8b8b8b;letter-spacing:-0.25px;">Open file...</span><span class="t f10" style="left:660px;top:579px;color:#8b8b8b;">u</span><svg class="b" style="left:702px;top:544px;" width="16" height="15" viewBox="0 0 16 15"><rect x=".7" y=".7" width="14.6" height="13.6" rx="1.5" fill="#4aa8e8" stroke="#1d6fb8" stroke-width="1.2"/><rect x="3" y="1.6" width="10" height="6" fill="#f4f8fc"/><path d="M4 3.4 H12 M4 5.4 H12" stroke="#8a9098" stroke-width="1" stroke-dasharray="2 .8"/><rect x="4.4" y="10" width="7.2" height="4.6" fill="#f0f0f0"/><rect x="6.3" y="11" width="1.6" height="3" fill="#444"/></svg><span class="t f10" style="left:720.5px;top:545px;color:#8b8b8b;letter-spacing:-0.46px;">Save</span><span class="t f10" style="left:752px;top:545px;color:#8b8b8b;">u</span><svg class="b" style="left:702px;top:573px;" width="16" height="15" viewBox="0 0 16 15"><rect x=".7" y=".7" width="14.6" height="13.6" rx="1.5" fill="#4aa8e8" stroke="#1d6fb8" stroke-width="1.2"/><rect x="3" y="1.6" width="10" height="6" fill="#f4f8fc"/><path d="M4 3.4 H12 M4 5.4 H12" stroke="#8a9098" stroke-width="1" stroke-dasharray="2 .8"/><rect x="3.5" y="8.6" width="12" height="6" fill="#fff" stroke="#1d6fb8" stroke-width="1.1"/><path d="M7.5 10.3 H10 M8.7 10.3 V13 M7.5 13 H10" stroke="#333" stroke-width=".9"/></svg><span class="t f10" style="left:720.5px;top:574px;color:#8b8b8b;letter-spacing:-0.34px;">Save as...</span><svg class="b" style="left:789.6px;top:535.5px;" width="31" height="31" viewBox="0 0 31 31"><defs><linearGradient id="gd2" x1="0" y1="0" x2="0" y2="1"><stop offset="0" stop-color="#3c3c40"/><stop offset="1" stop-color="#6c6c70"/></linearGradient><linearGradient id="gw2" x1="0" y1="0" x2="1" y2="0"><stop offset="0" stop-color="#e0b070"/><stop offset="1" stop-color="#b8782c"/></linearGradient></defs><path d="M0 29 H23" stroke="#5a5a5e" stroke-width="1.6"/><rect x="7.6" y="4" width="15" height="25" fill="url(#gd2)" stroke="#c88a30" stroke-width="1.2"/><path d="M22 4 L30.2 .6 V30.8 L22 29 Z" fill="url(#gw2)" stroke="#b8782c" stroke-width=".8"/><rect x="26.4" y="14" width="1.6" height="3.6" fill="#f4c020"/><path d="M.8 13 H5.6 V9.6 L11 16 L5.6 22.4 V19 H.8 Z" fill="#8cd820" stroke="#5a9a10" stroke-width="1.1" stroke-linejoin="round"/></svg><span class="t f10" style="left:795.5px;top:571px;color:#8b8b8b;letter-spacing:-0.2px;">Exit</span><span class="t f10" style="left:782.5px;top:584px;color:#8b8b8b;letter-spacing:0.19px;">program</span><span class="t f10" style="left:671.3px;top:600px;color:#3a3a3a;letter-spacing:0.2px;">File commands</span><svg class="b" style="left:848px;top:536.3px;" width="13" height="15" viewBox="0 0 13 15"><g transform="rotate(-18 6.5 8)"><path d="M3.5 .5 Q3 5 7.5 9.5 M8.2 .5 Q8 5 5 9.5" stroke="#b8bcc4" stroke-width="1.5" fill="none"/><ellipse cx="3.6" cy="12" rx="1.7" ry="2.4" fill="none" stroke="#3a82cc" stroke-width="1.6" transform="rotate(15 3.6 12)"/><ellipse cx="10.3" cy="11" rx="2.4" ry="1.7" fill="none" stroke="#3a82cc" stroke-width="1.6" transform="rotate(25 10.3 11)"/><path d="M5.5 7.5 L4 10 M6.5 8 L8.5 10" stroke="#3a82cc" stroke-width="1.5"/></g></svg><span class="t f10" style="left:865.6px;top:537px;color:#8b8b8b;letter-spacing:-0.1px;">Cut</span><svg class="b" style="left:847px;top:558px;" width="16" height="16" viewBox="0 0 16 16"><path d="M1 .8 H6.5 L9 3.3 V11 H1 Z" fill="#f4f4f4" stroke="#a9adb4" stroke-width="1"/><path d="M7 5.2 H12.5 L15 7.7 V15 H7 Z" fill="#fafafa" stroke="#a9adb4" stroke-width="1"/><path d="M6.5 .8 V3.3 H9 M12.5 5.2 V7.7 H15" fill="none" stroke="#a9adb4" stroke-width=".8"/><path d="M2.5 5 H6 M2.5 7 H5.5 M8.5 9.5 H12.5 M8.5 11.5 H13" stroke="#cfd2d6" stroke-width=".8"/></svg><span class="t f10" style="left:865.6px;top:559px;color:#8b8b8b;letter-spacing:-0.25px;">Copy</span><svg class="b" style="left:847px;top:579.6px;" width="16" height="16" viewBox="0 0 16 16"><rect x=".8" y="1.6" width="11" height="12.6" rx="1" fill="#c89050" stroke="#a06a2c" stroke-width="1"/><rect x="4" y=".4" width="4.6" height="2.6" rx=".8" fill="#b0b4bc" stroke="#888" stroke-width=".6"/><rect x="6.6" y="5.6" width="8.6" height="9.6" fill="#fcfcfc" stroke="#c4c4c4" stroke-width=".9"/><path d="M8.4 8 H13.4 M8.4 10.2 H13.4 M8.4 12.4 H13.4" stroke="#555" stroke-width="1" stroke-dasharray="1.6 .8"/></svg><span class="t f10" style="left:865.6px;top:581px;color:#8b8b8b;letter-spacing:0.02px;">Paste</span><div class="b" style="left:904px;top:541px;width:56px;height:22px;background:#ececec;border:1px solid #b8b8b8;border-radius:3px"></div><span class="t f10" style="left:908.3px;top:545px;color:#8b8b8b;letter-spacing:-0.14px;">Select all</span><div class="b" style="left:904px;top:570px;width:54px;height:22px;background:#ececec;border:1px solid #b8b8b8;border-radius:3px"></div><span class="t f10" style="left:908.3px;top:574px;color:#8b8b8b;letter-spacing:-0.15px;">Unselect</span><span class="t f10" style="left:858.3px;top:600px;color:#3a3a3a;letter-spacing:0.22px;">Edit commands</span><div class="b" style="left:587px;top:665px;width:506px;height:90px;background:#f1f1f1;"></div><div class="b" style="left:593px;top:644px;width:70px;height:22px;background:#f2f2f2;border:1px solid #f2f2f2;border-bottom:none;border-radius:3px 3px 0 0"></div><span class="t f10" style="left:599px;top:647px;color:#3059a8;letter-spacing:0.13px;">Metro light</span><div class="b" style="left:836px;top:668px;width:1px;height:85px;background:#d8d8d8;"></div><div class="b" style="left:964px;top:668px;width:1px;height:85px;background:#d8d8d8;"></div><svg class="b" style="left:599px;top:674px;" width="24" height="28" viewBox="0 0 24 28"><defs><linearGradient id="gn3" x1="0" y1="0" x2="0" y2="1"><stop offset="0" stop-color="#a9cfe2"/><stop offset=".72" stop-color="#e6f2f7"/><stop offset=".73" stop-color="#a5cadf"/><stop offset="1" stop-color="#b5d5e6"/></linearGradient></defs><path d="M.8 .8 H16 L23.2 8 V27.4 H.8 Z" fill="#fff" stroke="#2a7cba" stroke-width="1.5" stroke-linejoin="round"/><path d="M2.6 2.6 H15.2 V8.8 H21.4 V25.6 H2.6 Z" fill="url(#gn3)"/><path d="M16 1 V8 H23" fill="none" stroke="#2a7cba" stroke-width="1.3"/></svg><span class="t f10" style="left:599.6px;top:708px;color:#8b8b8b;letter-spacing:-0.41px;">New</span><span class="t f10" style="left:607.6px;top:716px;color:#8b8b8b;">u</span><svg class="b" style="left:648px;top:677px;" width="30" height="22" viewBox="0 0 30 22"><defs><linearGradient id="gf3" x1="0" y1="0" x2="0" y2="1"><stop offset="0" stop-color="#fbe08a"/><stop offset="1" stop-color="#f3c65a"/></linearGradient></defs><path d="M1 21 V1.5 Q1 .8 1.8 .8 H9 L11 3 H24.5 Q25.2 3 25.2 3.8 V8" fill="#f5cf6a" stroke="#d9a23c" stroke-width="1.2"/><path d="M1 21.2 L4.6 9.4 Q4.9 8.6 5.8 8.6 H12 L14 7 H28.8 Q29.8 7 29.5 8 L26 20.4 Q25.7 21.2 24.8 21.2 Z" fill="url(#gf3)" stroke="#dba53e" stroke-width="1.1" stroke-linejoin="round"/></svg><span class="t f10" style="left:635.7px;top:708px;color:#8b8b8b;letter-spacing:-0.25px;">Open file...</span><span class="t f10" style="left:660px;top:716px;color:#8b8b8b;">u</span><svg class="b" style="left:702px;top:681px;" width="16" height="15" viewBox="0 0 16 15"><rect x=".7" y=".7" width="14.6" height="13.6" rx="1.5" fill="#4aa8e8" stroke="#1d6fb8" stroke-width="1.2"/><rect x="3" y="1.6" width="10" height="6" fill="#f4f8fc"/><path d="M4 3.4 H12 M4 5.4 H12" stroke="#8a9098" stroke-width="1" stroke-dasharray="2 .8"/><rect x="4.4" y="10" width="7.2" height="4.6" fill="#f0f0f0"/><rect x="6.3" y="11" width="1.6" height="3" fill="#444"/></svg><span class="t f10" style="left:720.5px;top:682px;color:#8b8b8b;letter-spacing:-0.46px;">Save</span><span class="t f10" style="left:752px;top:682px;color:#8b8b8b;">u</span><svg class="b" style="left:702px;top:710px;" width="16" height="15" viewBox="0 0 16 15"><rect x=".7" y=".7" width="14.6" height="13.6" rx="1.5" fill="#4aa8e8" stroke="#1d6fb8" stroke-width="1.2"/><rect x="3" y="1.6" width="10" height="6" fill="#f4f8fc"/><path d="M4 3.4 H12 M4 5.4 H12" stroke="#8a9098" stroke-width="1" stroke-dasharray="2 .8"/><rect x="3.5" y="8.6" width="12" height="6" fill="#fff" stroke="#1d6fb8" stroke-width="1.1"/><path d="M7.5 10.3 H10 M8.7 10.3 V13 M7.5 13 H10" stroke="#333" stroke-width=".9"/></svg><span class="t f10" style="left:720.5px;top:711px;color:#8b8b8b;letter-spacing:-0.34px;">Save as...</span><svg class="b" style="left:789.6px;top:672.5px;" width="31" height="31" viewBox="0 0 31 31"><defs><linearGradient id="gd3" x1="0" y1="0" x2="0" y2="1"><stop offset="0" stop-color="#3c3c40"/><stop offset="1" stop-color="#6c6c70"/></linearGradient><linearGradient id="gw3" x1="0" y1="0" x2="1" y2="0"><stop offset="0" stop-color="#e0b070"/><stop offset="1" stop-color="#b8782c"/></linearGradient></defs><path d="M0 29 H23" stroke="#5a5a5e" stroke-width="1.6"/><rect x="7.6" y="4" width="15" height="25" fill="url(#gd3)" stroke="#c88a30" stroke-width="1.2"/><path d="M22 4 L30.2 .6 V30.8 L22 29 Z" fill="url(#gw3)" stroke="#b8782c" stroke-width=".8"/><rect x="26.4" y="14" width="1.6" height="3.6" fill="#f4c020"/><path d="M.8 13 H5.6 V9.6 L11 16 L5.6 22.4 V19 H.8 Z" fill="#8cd820" stroke="#5a9a10" stroke-width="1.1" stroke-linejoin="round"/></svg><span class="t f10" style="left:795.5px;top:708px;color:#8b8b8b;letter-spacing:-0.2px;">Exit</span><span class="t f10" style="left:782.5px;top:721px;color:#8b8b8b;letter-spacing:0.19px;">program</span><span class="t f10" style="left:671.3px;top:737px;color:#707070;letter-spacing:0.2px;">File commands</span><svg class="b" style="left:848px;top:673.3px;" width="13" height="15" viewBox="0 0 13 15"><g transform="rotate(-18 6.5 8)"><path d="M3.5 .5 Q3 5 7.5 9.5 M8.2 .5 Q8 5 5 9.5" stroke="#b8bcc4" stroke-width="1.5" fill="none"/><ellipse cx="3.6" cy="12" rx="1.7" ry="2.4" fill="none" stroke="#3a82cc" stroke-width="1.6" transform="rotate(15 3.6 12)"/><ellipse cx="10.3" cy="11" rx="2.4" ry="1.7" fill="none" stroke="#3a82cc" stroke-width="1.6" transform="rotate(25 10.3 11)"/><path d="M5.5 7.5 L4 10 M6.5 8 L8.5 10" stroke="#3a82cc" stroke-width="1.5"/></g></svg><span class="t f10" style="left:865.6px;top:674px;color:#8b8b8b;letter-spacing:-0.1px;">Cut</span><svg class="b" style="left:847px;top:695px;" width="16" height="16" viewBox="0 0 16 16"><path d="M1 .8 H6.5 L9 3.3 V11 H1 Z" fill="#f4f4f4" stroke="#a9adb4" stroke-width="1"/><path d="M7 5.2 H12.5 L15 7.7 V15 H7 Z" fill="#fafafa" stroke="#a9adb4" stroke-width="1"/><path d="M6.5 .8 V3.3 H9 M12.5 5.2 V7.7 H15" fill="none" stroke="#a9adb4" stroke-width=".8"/><path d="M2.5 5 H6 M2.5 7 H5.5 M8.5 9.5 H12.5 M8.5 11.5 H13" stroke="#cfd2d6" stroke-width=".8"/></svg><span class="t f10" style="left:865.6px;top:696px;color:#8b8b8b;letter-spacing:-0.25px;">Copy</span><svg class="b" style="left:847px;top:716.6px;" width="16" height="16" viewBox="0 0 16 16"><rect x=".8" y="1.6" width="11" height="12.6" rx="1" fill="#c89050" stroke="#a06a2c" stroke-width="1"/><rect x="4" y=".4" width="4.6" height="2.6" rx=".8" fill="#b0b4bc" stroke="#888" stroke-width=".6"/><rect x="6.6" y="5.6" width="8.6" height="9.6" fill="#fcfcfc" stroke="#c4c4c4" stroke-width=".9"/><path d="M8.4 8 H13.4 M8.4 10.2 H13.4 M8.4 12.4 H13.4" stroke="#555" stroke-width="1" stroke-dasharray="1.6 .8"/></svg><span class="t f10" style="left:865.6px;top:718px;color:#8b8b8b;letter-spacing:0.02px;">Paste</span><div class="b" style="left:904px;top:678px;width:56px;height:22px;background:#dcdcdc;border:1px solid #d2d2d2;border-radius:0px"></div><span class="t f10" style="left:908.3px;top:682px;color:#8b8b8b;letter-spacing:-0.14px;">Select all</span><div class="b" style="left:904px;top:707px;width:54px;height:22px;background:#dcdcdc;border:1px solid #d2d2d2;border-radius:0px"></div><span class="t f10" style="left:908.3px;top:711px;color:#8b8b8b;letter-spacing:-0.15px;">Unselect</span><span class="t f10" style="left:858.3px;top:737px;color:#707070;letter-spacing:0.22px;">Edit commands</span><div class="b" style="left:587px;top:802px;width:506px;height:90px;background:#444444;border:1px solid #1c1c1c;"></div><div class="b" style="left:593px;top:781px;width:70px;height:22px;background:#444444;border:1px solid #1c1c1c;border-bottom:none;border-radius:3px 3px 0 0"></div><span class="t f10" style="left:599px;top:784px;color:#ffffff;letter-spacing:0.01px;">Metro dark</span><div class="b" style="left:836px;top:805px;width:1px;height:85px;background:#5c5c5c;"></div><div class="b" style="left:964px;top:805px;width:1px;height:85px;background:#5c5c5c;"></div><svg class="b" style="left:599px;top:811px;" width="24" height="28" viewBox="0 0 24 28"><defs><linearGradient id="gn4" x1="0" y1="0" x2="0" y2="1"><stop offset="0" stop-color="#a9cfe2"/><stop offset=".72" stop-color="#e6f2f7"/><stop offset=".73" stop-color="#a5cadf"/><stop offset="1" stop-color="#b5d5e6"/></linearGradient></defs><path d="M.8 .8 H16 L23.2 8 V27.4 H.8 Z" fill="#fff" stroke="#2a7cba" stroke-width="1.5" stroke-linejoin="round"/><path d="M2.6 2.6 H15.2 V8.8 H21.4 V25.6 H2.6 Z" fill="url(#gn4)"/><path d="M16 1 V8 H23" fill="none" stroke="#2a7cba" stroke-width="1.3"/></svg><span class="t f10" style="left:599.6px;top:845px;color:#b4b4b4;letter-spacing:-0.41px;">New</span><span class="t f10" style="left:607.6px;top:853px;color:#b4b4b4;">u</span><svg class="b" style="left:648px;top:814px;" width="30" height="22" viewBox="0 0 30 22"><defs><linearGradient id="gf4" x1="0" y1="0" x2="0" y2="1"><stop offset="0" stop-color="#fbe08a"/><stop offset="1" stop-color="#f3c65a"/></linearGradient></defs><path d="M1 21 V1.5 Q1 .8 1.8 .8 H9 L11 3 H24.5 Q25.2 3 25.2 3.8 V8" fill="#f5cf6a" stroke="#d9a23c" stroke-width="1.2"/><path d="M1 21.2 L4.6 9.4 Q4.9 8.6 5.8 8.6 H12 L14 7 H28.8 Q29.8 7 29.5 8 L26 20.4 Q25.7 21.2 24.8 21.2 Z" fill="url(#gf4)" stroke="#dba53e" stroke-width="1.1" stroke-linejoin="round"/></svg><span class="t f10" style="left:635.7px;top:845px;color:#b4b4b4;letter-spacing:-0.25px;">Open file...</span><span class="t f10" style="left:660px;top:853px;color:#b4b4b4;">u</span><svg class="b" style="left:702px;top:818px;" width="16" height="15" viewBox="0 0 16 15"><rect x=".7" y=".7" width="14.6" height="13.6" rx="1.5" fill="#4aa8e8" stroke="#1d6fb8" stroke-width="1.2"/><rect x="3" y="1.6" width="10" height="6" fill="#f4f8fc"/><path d="M4 3.4 H12 M4 5.4 H12" stroke="#8a9098" stroke-width="1" stroke-dasharray="2 .8"/><rect x="4.4" y="10" width="7.2" height="4.6" fill="#f0f0f0"/><rect x="6.3" y="11" width="1.6" height="3" fill="#444"/></svg><span class="t f10" style="left:720.5px;top:819px;color:#b4b4b4;letter-spacing:-0.46px;">Save</span><span class="t f10" style="left:752px;top:819px;color:#b4b4b4;">u</span><svg class="b" style="left:702px;top:847px;" width="16" height="15" viewBox="0 0 16 15"><rect x=".7" y=".7" width="14.6" height="13.6" rx="1.5" fill="#4aa8e8" stroke="#1d6fb8" stroke-width="1.2"/><rect x="3" y="1.6" width="10" height="6" fill="#f4f8fc"/><path d="M4 3.4 H12 M4 5.4 H12" stroke="#8a9098" stroke-width="1" stroke-dasharray="2 .8"/><rect x="3.5" y="8.6" width="12" height="6" fill="#fff" stroke="#1d6fb8" stroke-width="1.1"/><path d="M7.5 10.3 H10 M8.7 10.3 V13 M7.5 13 H10" stroke="#333" stroke-width=".9"/></svg><span class="t f10" style="left:720.5px;top:848px;color:#b4b4b4;letter-spacing:-0.34px;">Save as...</span><svg class="b" style="left:789.6px;top:809.5px;" width="31" height="31" viewBox="0 0 31 31"><defs><linearGradient id="gd4" x1="0" y1="0" x2="0" y2="1"><stop offset="0" stop-color="#3c3c40"/><stop offset="1" stop-color="#6c6c70"/></linearGradient><linearGradient id="gw4" x1="0" y1="0" x2="1" y2="0"><stop offset="0" stop-color="#e0b070"/><stop offset="1" stop-color="#b8782c"/></linearGradient></defs><path d="M0 29 H23" stroke="#5a5a5e" stroke-width="1.6"/><rect x="7.6" y="4" width="15" height="25" fill="url(#gd4)" stroke="#c88a30" stroke-width="1.2"/><path d="M22 4 L30.2 .6 V30.8 L22 29 Z" fill="url(#gw4)" stroke="#b8782c" stroke-width=".8"/><rect x="26.4" y="14" width="1.6" height="3.6" fill="#f4c020"/><path d="M.8 13 H5.6 V9.6 L11 16 L5.6 22.4 V19 H.8 Z" fill="#8cd820" stroke="#5a9a10" stroke-width="1.1" stroke-linejoin="round"/></svg><span class="t f10" style="left:795.5px;top:845px;color:#b4b4b4;letter-spacing:-0.2px;">Exit</span><span class="t f10" style="left:782.5px;top:858px;color:#b4b4b4;letter-spacing:0.19px;">program</span><span class="t f10" style="left:671.3px;top:874px;color:#ffffff;letter-spacing:0.2px;">File commands</span><svg class="b" style="left:848px;top:810.3px;" width="13" height="15" viewBox="0 0 13 15"><g transform="rotate(-18 6.5 8)"><path d="M3.5 .5 Q3 5 7.5 9.5 M8.2 .5 Q8 5 5 9.5" stroke="#b8bcc4" stroke-width="1.5" fill="none"/><ellipse cx="3.6" cy="12" rx="1.7" ry="2.4" fill="none" stroke="#3a82cc" stroke-width="1.6" transform="rotate(15 3.6 12)"/><ellipse cx="10.3" cy="11" rx="2.4" ry="1.7" fill="none" stroke="#3a82cc" stroke-width="1.6" transform="rotate(25 10.3 11)"/><path d="M5.5 7.5 L4 10 M6.5 8 L8.5 10" stroke="#3a82cc" stroke-width="1.5"/></g></svg><span class="t f10" style="left:865.6px;top:811px;color:#b4b4b4;letter-spacing:-0.1px;">Cut</span><svg class="b" style="left:847px;top:832px;" width="16" height="16" viewBox="0 0 16 16"><path d="M1 .8 H6.5 L9 3.3 V11 H1 Z" fill="#f4f4f4" stroke="#a9adb4" stroke-width="1"/><path d="M7 5.2 H12.5 L15 7.7 V15 H7 Z" fill="#fafafa" stroke="#a9adb4" stroke-width="1"/><path d="M6.5 .8 V3.3 H9 M12.5 5.2 V7.7 H15" fill="none" stroke="#a9adb4" stroke-width=".8"/><path d="M2.5 5 H6 M2.5 7 H5.5 M8.5 9.5 H12.5 M8.5 11.5 H13" stroke="#cfd2d6" stroke-width=".8"/></svg><span class="t f10" style="left:865.6px;top:833px;color:#b4b4b4;letter-spacing:-0.25px;">Copy</span><svg class="b" style="left:847px;top:853.6px;" width="16" height="16" viewBox="0 0 16 16"><rect x=".8" y="1.6" width="11" height="12.6" rx="1" fill="#c89050" stroke="#a06a2c" stroke-width="1"/><rect x="4" y=".4" width="4.6" height="2.6" rx=".8" fill="#b0b4bc" stroke="#888" stroke-width=".6"/><rect x="6.6" y="5.6" width="8.6" height="9.6" fill="#fcfcfc" stroke="#c4c4c4" stroke-width=".9"/><path d="M8.4 8 H13.4 M8.4 10.2 H13.4 M8.4 12.4 H13.4" stroke="#555" stroke-width="1" stroke-dasharray="1.6 .8"/></svg><span class="t f10" style="left:865.6px;top:855px;color:#b4b4b4;letter-spacing:0.02px;">Paste</span><div class="b" style="left:904px;top:815px;width:56px;height:22px;background:transparent;border:1px solid #8a8a8a;border-radius:0px"></div><span class="t f10" style="left:908.3px;top:819px;color:#b4b4b4;letter-spacing:-0.14px;">Select all</span><div class="b" style="left:904px;top:844px;width:54px;height:22px;background:transparent;border:1px solid #8a8a8a;border-radius:0px"></div><span class="t f10" style="left:908.3px;top:848px;color:#b4b4b4;letter-spacing:-0.15px;">Unselect</span><span class="t f10" style="left:858.3px;top:874px;color:#ffffff;letter-spacing:0.22px;">Edit commands</span>
<!-- p_ex -->
<div class="b" style="left:1249px;top:91px;width:408px;height:842px;background:#e8e8e7;border-radius:8px 8px 0 0;box-shadow:inset 0 1px 0 #f8f8f8"></div><span class="t f0" style="left:1395.3px;top:100px;color:#8f9394;letter-spacing:-0.43px;">Example Projects</span><svg class="b" style="left:1634.5px;top:104.5px;" width="9" height="9" viewBox="0 0 9 9"><path d="M1 1 L8 8 M8 1 L1 8" stroke="#8b8e8f" stroke-width="2" fill="none"/></svg><div class="b" style="left:1249px;top:127px;width:408px;height:1px;background:#a9a9a8;"></div><div class="b" style="left:1249px;top:128px;width:408px;height:14px;background:#fefeb8;border-bottom:1px solid #c8c8a0;border-top:1px solid #f4f4d0"></div><svg class="b" style="left:1645px;top:130.5px;" width="10" height="10" viewBox="0 0 10 10"><path d="M1.2 1.2 L8.8 8.8 M8.8 1.2 L1.2 8.8" stroke="#111" stroke-width="2.3" fill="none"/></svg><div class="b" style="left:1249px;top:143px;width:408px;height:132px;background:linear-gradient(180deg,#f1f1f0 0,#f1f1f0 120px,#e9e9e8 132px)"></div><div class="b" style="left:1300px;top:146px;width:1px;height:21px;background:#d4d4d3;"></div><div class="b" style="left:1301px;top:146px;width:1px;height:21px;background:#f6f6f5;"></div><div class="b" style="left:1330px;top:146px;width:1px;height:21px;background:#d4d4d3;"></div><div class="b" style="left:1331px;top:146px;width:1px;height:21px;background:#f6f6f5;"></div><div class="b" style="left:1360px;top:146px;width:1px;height:21px;background:#d4d4d3;"></div><div class="b" style="left:1361px;top:146px;width:1px;height:21px;background:#f6f6f5;"></div><div class="b" style="left:1390px;top:146px;width:1px;height:21px;background:#d4d4d3;"></div><div class="b" style="left:1391px;top:146px;width:1px;height:21px;background:#f6f6f5;"></div><svg class="b" style="left:1254.5px;top:147.5px;" width="16" height="16" viewBox="0 0 16 16"><path d="M13.6 7 A5.6 5.6 0 0 0 4 4" stroke="#9a2aa8" stroke-width="3.2" fill="none"/><path d="M.6 1.6 L7.4 2.6 L3 8.2 Z" fill="#9a2aa8"/><path d="M2.4 9 A5.6 5.6 0 0 0 12 12" stroke="#c05ccc" stroke-width="3.2" fill="none"/><path d="M15.4 14.4 L8.6 13.4 L13 7.8 Z" fill="#c05ccc"/></svg><svg class="b" style="left:1279px;top:147.5px;" width="16" height="16" viewBox="0 0 16 16"><path d="M.5 10.5 Q4 8 8 10 T15.5 9.5 M.5 13 Q4 10.5 8 12.5 T15.5 12 M.5 15.3 Q4 13 8 15 T15.5 14.5" stroke="#3a82e0" stroke-width="1.8" fill="none"/><path d="M8 6.5 L14 .5 L15.5 2 L10 8.5 Z" fill="#a8642c"/><path d="M2 8.5 Q6 4 10.5 5.5 L11.5 9 Q9 13 5.5 12 Z" fill="#f0a050" stroke="#c87830" stroke-width=".6"/></svg><svg class="b" style="left:1309px;top:147.5px;" width="17" height="16" viewBox="0 0 17 16"><rect x="7.5" y="1" width="8" height="7" fill="#c8f070" stroke="#2a5ac8" stroke-width="1.2"/><path d="M1.5 9 V5 Q1.5 2.5 4.5 2.5 V.8 L7.2 3.5 L4.5 6.2 V4.5 Q3.5 4.5 3.5 6 V9 Z" fill="#2040c0"/><rect x="1" y="10.5" width="10" height="4.6" rx=".8" fill="#f4f4f4" stroke="#000" stroke-width="1.1"/><rect x="2.5" y="12" width="3" height="1.2" fill="#e02020"/></svg><svg class="b" style="left:1339px;top:147.5px;" width="16" height="16" viewBox="0 0 16 16"><path d="M3 8 V14.5 H8 M3 10.8 H8" stroke="#1d55c8" stroke-width="1.1" fill="none"/><rect x="1" y="5.8" width="4.5" height="2.6" fill="#78a8f0" stroke="#1d55c8" stroke-width=".9"/><rect x="7" y="9.5" width="4.5" height="2.6" fill="#78a8f0" stroke="#1d55c8" stroke-width=".9"/><rect x="7" y="13.2" width="4.5" height="2.6" fill="#78a8f0" stroke="#1d55c8" stroke-width=".9"/><path d="M9 1 L14.5 6.5 M14.5 1 L9 6.5" stroke="#e01010" stroke-width="2"/></svg><svg class="b" style="left:1369px;top:147.5px;" width="16" height="16" viewBox="0 0 16 16"><path d="M1 3 H6 L7.5 1.5 H14.5 V13.5 H1 Z" fill="#f0b830" stroke="#c08a18" stroke-width="1"/><circle cx="8" cy="8.5" r="3.6" fill="#58a8e8"/><circle cx="7.2" cy="7.8" r="1.8" fill="#a8d8f8"/><path d="M1 13.5 L3 15.5 V13.5 Z" fill="#c08a18"/></svg><svg class="b" style="left:1399px;top:147.5px;" width="17" height="16" viewBox="0 0 17 16"><path d="M5.5 .8 L10.4 5.6 L5.5 10.4 L.8 5.6 Z" fill="#fff070" stroke="#222" stroke-width="1.1"/><path d="M5.5 3.4 V6.2 M5.5 7.2 V8.2" stroke="#222" stroke-width="1.2"/><rect x="8.5" y="8.5" width="8" height="7" fill="#d8d8d8" stroke="#333" stroke-width="1"/><rect x="10.5" y="12" width="4" height="3" fill="#f4f4f4" stroke="#555" stroke-width=".6"/></svg><div class="b" style="left:1258px;top:176px;width:344px;height:35px;background:#fff;border:1px solid #a9a9a7;border-radius:3.5px;box-shadow:inset 0 1px 1px rgba(0,0,0,.07)"></div><span class="t f7" style="left:1268.3px;top:184px;color:#1c1c1c;letter-spacing:-0.010px;">/usr/local/codetyphon/CodeOcean</span><div class="b" style="left:1608px;top:176px;width:21px;height:35px;border:1px solid #b4b4b2;border-radius:4px;background:linear-gradient(180deg,#f4f4f3,#e2e2e1)"></div><svg class="b" style="left:1610.5px;top:186px;" width="17" height="15" viewBox="0 0 17 15"><path d="M1 2 H6 L7.5 3.5 H15.5 V14 H1 Z" fill="#8a8a8a" stroke="#666" stroke-width=".8"/><rect x="2" y="6" width="13.5" height="8" rx="1" fill="#4a88d8" stroke="#2a5ca8" stroke-width="1"/><rect x="3" y="7" width="11.5" height="3" fill="#7ab0f0"/></svg><div class="b" style="left:1258px;top:218px;width:130px;height:35px;background:#fff;border:1px solid #a9a9a7;border-radius:3.5px;box-shadow:inset 0 1px 1px rgba(0,0,0,.07)"></div><span class="t f7" style="left:1268.8px;top:226px;color:#9c9e9f;letter-spacing:0.17px;">(filter)</span><div class="b" style="left:1394px;top:218px;width:21px;height:35px;border:1px solid #b4b4b2;border-radius:4px;background:linear-gradient(180deg,#f4f4f3,#e2e2e1)"></div><svg class="b" style="left:1396.5px;top:228px;" width="17" height="15" viewBox="0 0 17 15"><path d="M.5 .8 H14.5 L9.5 6.5 V12.5 L6 10.5 V6.5 Z" fill="#a8abac" stroke="#888b8c" stroke-width=".8"/><path d="M9.5 8.5 L15.5 14 M15.5 8.5 L9.5 14" stroke="#8a8d8e" stroke-width="2"/></svg><div class="b" style="left:1426.5px;top:221.5px;width:14.5px;height:14.5px;border:1px solid #a0a0a0;border-radius:3px;background:linear-gradient(180deg,#fbfbfb,#e4e4e3)"></div><svg class="b" style="left:1428px;top:222px;" width="13" height="13" viewBox="0 0 13 13"><path d="M2 6.2 L5 9.6 L11 2" stroke="#2e3436" stroke-width="2.4" fill="none"/></svg><span class="t f7" style="left:1448.2px;top:220px;color:#2e3436;letter-spacing:-0.26px;">Relative paths</span><div class="b" style="left:1426.5px;top:245.5px;width:14.5px;height:14.5px;border:1px solid #a0a0a0;border-radius:3px;background:linear-gradient(180deg,#fbfbfb,#e4e4e3)"></div><span class="t f7" style="left:1448.2px;top:244px;color:#2e3436;letter-spacing:0.03px;">Multi-Projects</span><div class="b" style="left:1249px;top:275px;width:408px;height:1px;background:#b0b0af;"></div><div class="b" style="left:1249px;top:276px;width:394px;height:601px;background:#fff;overflow:hidden"><div class="b" style="left:0px;top:359px;width:394px;height:25px;background:#4a90d9;"></div><span class="t f7" style="left:6px;top:-1px;color:#1a1a1a;letter-spacing:-0.01px;">pl_SolutionsWeb/samples/Debug/Debug.ctpr</span><span class="t f7" style="left:6px;top:25px;color:#1a1a1a;letter-spacing:-0.07px;">pl_SolutionsWeb/samples/ETag/ETag.ctpr</span><span class="t f7" style="left:6px;top:51px;color:#1a1a1a;letter-spacing:0.13px;">pl_SolutionsWeb/samples/Hello/Hello.ctpr</span><span class="t f7" style="left:6px;top:77px;color:#1a1a1a;letter-spacing:-0.04px;">pl_SolutionsWeb/samples/LastModified/LastModified.ctpr</span><span class="t f7" style="left:6px;top:103px;color:#1a1a1a;letter-spacing:-0.06px;">pl_SolutionsWeb/samples/Location/Location.ctpr</span><span class="t f7" style="left:6px;top:129px;color:#1a1a1a;letter-spacing:-0.04px;">pl_SolutionsWeb/samples/Login/Login.ctpr</span><span class="t f7" style="left:6px;top:155px;color:#1a1a1a;">pl_SolutionsWeb/samples/MicroSite/MicroSite.ctpr</span><span class="t f7" style="left:6px;top:181px;color:#1a1a1a;letter-spacing:-0.06px;">pl_SolutionsWeb/samples/Sessions/Sessions.ctpr</span><span class="t f7" style="left:6px;top:207px;color:#1a1a1a;letter-spacing:-0.07px;">pl_SolutionsWeb/samples/TransferEncodingChunked/cgi11.ctpr</span><span class="t f7" style="left:6px;top:233px;color:#1a1a1a;letter-spacing:-0.04px;">pl_SolutionsWeb/samples/TransferEncodingDeflate/cgi12.ctpr</span><span class="t f7" style="left:6px;top:259px;color:#1a1a1a;letter-spacing:-0.04px;">pl_SolutionsWeb/samples/Uploads/Uploads.ctpr</span><span class="t f7" style="left:6px;top:285px;color:#1a1a1a;letter-spacing:-0.05px;">pl_SpkToolBar/samples/actions/actionproject.ctpr</span><span class="t f7" style="left:6px;top:311px;color:#1a1a1a;letter-spacing:-0.09px;">pl_SpkToolBar/samples/basic/basicproject.ctpr</span><span class="t f7" style="left:6px;top:337px;color:#1a1a1a;letter-spacing:0.009px;">pl_SpkToolBar/samples/runtime/runtimeproject.ctpr</span><span class="t f7" style="left:6px;top:363px;color:#fff;letter-spacing:0.07px;">pl_SpkToolBar/samples/styles/stylesproject1.ctpr</span><span class="t f7" style="left:6px;top:389px;color:#1a1a1a;letter-spacing:-0.14px;">pl_Synapse/samples/ComPortMeasuring/ComPortMeasuring.ctpr</span><span class="t f7" style="left:6px;top:415px;color:#1a1a1a;letter-spacing:0.02px;">pl_Synapse/samples/FtpClientDemo/ftpclientdemo.ctpr</span><span class="t f7" style="left:6px;top:441px;color:#1a1a1a;letter-spacing:-0.09px;">pl_Synapse/samples/FtpServerDemo/FtpServerDemo.ctpr</span><span class="t f7" style="left:6px;top:467px;color:#1a1a1a;letter-spacing:-0.14px;">pl_Synapse/samples/GPSSimulator/GPSSimulator.ctpr</span><span class="t f7" style="left:6px;top:493px;color:#1a1a1a;letter-spacing:-0.12px;">pl_TitanScript/samples/0_SimpleIDE/SimpleIDE.ctpr</span><span class="t f7" style="left:6px;top:519px;color:#1a1a1a;letter-spacing:0.03px;">pl_TitanScript/samples/1_UnitImporter/UnitImporter.ctpr</span><span class="t f7" style="left:6px;top:545px;color:#1a1a1a;letter-spacing:-0.09px;">pl_TitanScript/samples/TitanScriptForms/TitanScriptForms.ctpr</span><span class="t f7" style="left:6px;top:571px;color:#1a1a1a;letter-spacing:0.04px;">pl_TitanScript/samples/ztest/project1.ctpr</span></div><div class="b" style="left:1643px;top:276px;width:14px;height:601px;background:#c0c0bf;"></div><div class="b" style="left:1647.3px;top:763px;width:6px;height:42px;background:#7c7e7f;border-radius:3px"></div><div class="b" style="left:1249px;top:877px;width:408px;height:1px;background:#b0b0af;"></div><div class="b" style="left:1250px;top:887px;width:406px;height:44px;background:#fff;border:1px solid #a4a4a3"></div><span class="t f7" style="left:1252px;top:889px;color:#1a1a1a;letter-spacing:-0.18px;">Win32,Win64,Lin32,Lin64,Sol32,Sol64</span>
</div>
</body></html>
